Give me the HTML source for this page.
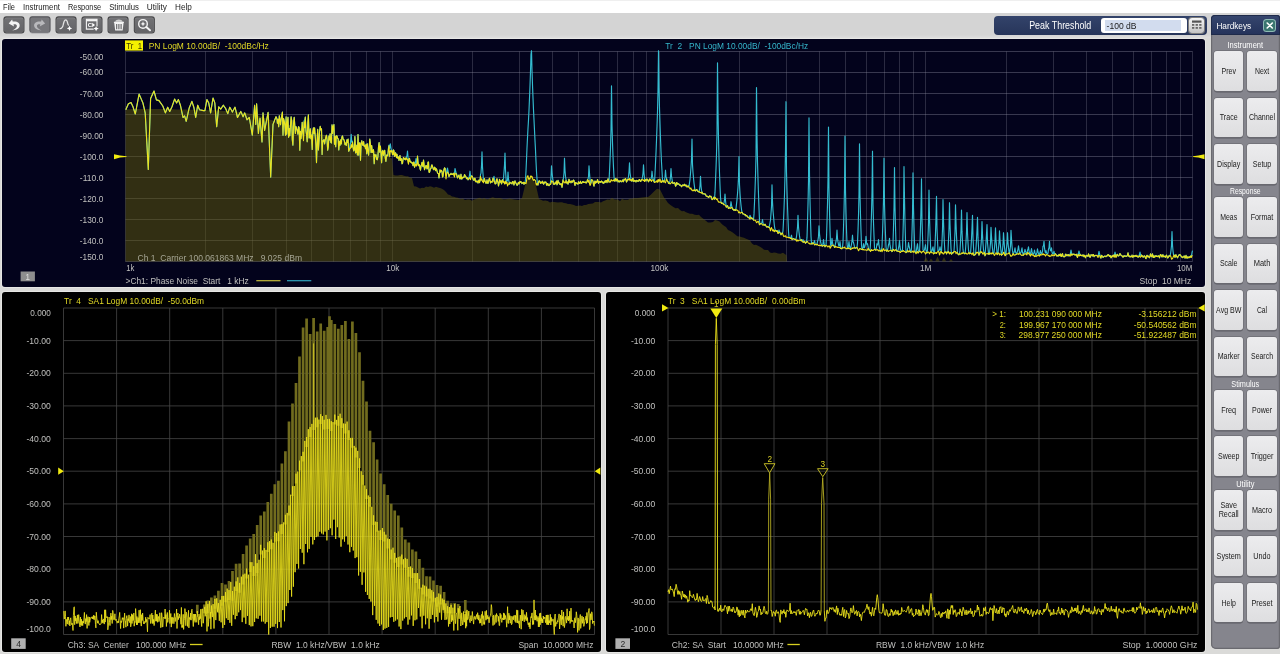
<!DOCTYPE html>
<html lang="en"><head><meta charset="utf-8"><title>Network Analyzer</title>
<style>
html,body{margin:0;padding:0}
body{width:1280px;height:654px;overflow:hidden;background:#dadad8;position:relative;font-family:"Liberation Sans",sans-serif}
#menu{position:absolute;left:0;top:0;width:1280px;height:13px;background:linear-gradient(#efefef 0,#efefef 1px,#ffffff 1.500px,#ffffff 100%)}
#tbbg{position:absolute;left:0;top:13px;width:1280px;height:25px;background:linear-gradient(#d4d4d4 0,#d4d4d4 88%,#dedede 100%)}
#tb{position:absolute;left:0;top:14px;will-change:transform}
.win{position:absolute;overflow:hidden;border-radius:3px;box-shadow:0 0 0 1px #e6e6e4}
.plot{display:block;position:absolute;left:0;top:0;will-change:transform}
text{font-family:"Liberation Sans",sans-serif}
#ov{position:absolute;left:0;top:0;pointer-events:none;will-change:transform}
#pk{position:absolute;left:994px;top:16px;width:213px;height:18.600px;border-radius:4px;background:linear-gradient(#33436a,#27355a)}
#pk .inp{position:absolute;left:107.200px;top:2.300px;width:85.800px;height:14.400px;border-radius:3px;background:#fff}
#pk .sel{position:absolute;left:4.200px;top:1.600px;width:75.600px;height:10.800px;background:#d2dcee}
#pk .kp{position:absolute;left:195.300px;top:2.300px;width:15.200px;height:14.400px;border-radius:3px;background:linear-gradient(#f6f6f6,#c4c4c4);box-shadow:0 0 0 1px #7c7c7c}
#pk .kp svg{display:block}
#hk{position:absolute;left:1210.500px;top:15.400px;width:69px;height:633.800px;background:#85858d;border-radius:5px 3px 3px 5px;box-shadow:0 0 0 1.200px #6a6a70 inset}
#hkhead{position:absolute;left:0;top:0;width:69px;height:19.300px;background:linear-gradient(#36466e,#24325a);border-radius:4px 3px 0 0;box-shadow:0 0 0 1px #1e2a4a inset}
#hkx{position:absolute;left:53px;top:4.400px;width:11.500px;height:11px;border-radius:2.500px;background:#3a7670;box-shadow:0 0 0 1px #8fbab4}
#hkx svg{display:block}
.hkb{position:absolute;width:29.500px;height:39.600px;border-radius:3px;background:linear-gradient(#ececee,#dedee0);box-shadow:0 0 0 .7px #6e6e74,0 1.600px .5px 0 #5c5c64}
</style></head><body>
<div id="menu"></div>
<div id="tbbg"></div>
<svg id="tb" width="160" height="24" viewBox="0 14 160 24"><defs><linearGradient id="bg1" x1="0" y1="0" x2="0" y2="1"><stop offset="0" stop-color="#717174"/><stop offset="1" stop-color="#646467"/></linearGradient></defs>
<rect x="3.4" y="16.3" width="21.100" height="17.200" rx="3" fill="#48484a"/>
<rect x="4.5" y="17.4" width="18.900" height="15" rx="2" fill="#86868a"/>
<rect x="4.5" y="18.2" width="18.900" height="14.200" rx="2" fill="url(#bg1)"/>
<g transform="translate(3.4,16.3)"><path d="M5.300 7.300L8.700 3.100L9.300 5.300C13.600 4.700 17 6.900 16.200 9.900C15.500 12.500 12.300 14 8.800 14.100C11.800 13 13.500 11.500 13.500 9.800C13.500 8.200 12 7.700 10 8.100L10.700 10.300Z" fill="#f4f4f4"/></g>
<rect x="29.4" y="16.3" width="21.100" height="17.200" rx="3" fill="#a2a2a6"/>
<rect x="29.4" y="16.3" width="21.100" height="16.300" rx="3" fill="#58585c"/>
<rect x="30.4" y="17.4" width="19.100" height="14.800" rx="2" fill="#77777b"/>
<g transform="translate(29.4,16.3)"><g transform="translate(21,0) scale(-1,1)"><path d="M5.300 7.300L8.700 3.100L9.300 5.300C13.600 4.700 17 6.900 16.200 9.900C15.500 12.500 12.300 14 8.800 14.100C11.800 13 13.500 11.500 13.500 9.800C13.500 8.200 12 7.700 10 8.100L10.700 10.300Z" fill="#b9b9bc"/></g></g>
<rect x="55.5" y="16.3" width="21.100" height="17.200" rx="3" fill="#48484a"/>
<rect x="56.6" y="17.4" width="18.900" height="15" rx="2" fill="#86868a"/>
<rect x="56.6" y="18.2" width="18.900" height="14.200" rx="2" fill="url(#bg1)"/>
<g transform="translate(55.5,16.3)"><path d="M4.600 12.400C7.400 12.200 7.400 9.800 8 7.200C8.600 4.600 9.200 3.500 10.200 3.500C11.400 3.500 11.800 5 12.100 6.600C12.300 7.700 12.500 8.300 13 8.800" fill="none" stroke="#e4e4e4" stroke-width="1.250" stroke-linecap="round"/><path d="M14 9.4L14.8 11.3L16.7 12.1L14.8 12.9L14 14.8L13.2 12.9L11.3 12.1L13.2 11.3Z" fill="#ffffff"/></g>
<rect x="81.4" y="16.3" width="21.100" height="17.200" rx="3" fill="#48484a"/>
<rect x="82.5" y="17.4" width="18.900" height="15" rx="2" fill="#86868a"/>
<rect x="82.5" y="18.2" width="18.900" height="14.200" rx="2" fill="url(#bg1)"/>
<g transform="translate(81.4,16.3)"><path d="M5 3H15.600V12.800H5z" fill="none" stroke="#f4f4f4" stroke-width="1.100"/><path d="M5 3H15.600V5H5z" fill="#f4f4f4"/><text x="6.300" y="11" font-size="6" font-weight="bold" fill="#fff">C</text><path d="M10.800 6.500L13.600 8.700L10.800 10.900z" fill="#fff"/><circle cx="14.700" cy="12.300" r="2.600" fill="#68686b"/><path d="M14.7 9.6L15.5 11.5L17.4 12.3L15.5 13.1L14.7 15L13.9 13.1L12 12.3L13.9 11.5Z" fill="#ffffff"/></g>
<rect x="107.5" y="16.3" width="21.100" height="17.200" rx="3" fill="#48484a"/>
<rect x="108.6" y="17.4" width="18.900" height="15" rx="2" fill="#86868a"/>
<rect x="108.6" y="18.2" width="18.900" height="14.200" rx="2" fill="url(#bg1)"/>
<g transform="translate(107.5,16.3)"><path d="M6.700 6.100H16.100L15.100 14.200H7.700z" fill="#f4f4f4"/><path d="M9.200 7.600V13M11.400 7.600V13M13.600 7.600V13" stroke="#606063" stroke-width="1.100"/><path d="M7.600 5.400C8.300 2.400 14.300 2.300 15.200 5.400z" fill="#d0d0d0"/><path d="M6.400 6H16.400" stroke="#fff" stroke-width="1.100"/></g>
<rect x="133.8" y="16.3" width="21.100" height="17.200" rx="3" fill="#48484a"/>
<rect x="134.9" y="17.4" width="18.900" height="15" rx="2" fill="#86868a"/>
<rect x="134.9" y="18.2" width="18.900" height="14.200" rx="2" fill="url(#bg1)"/>
<g transform="translate(133.8,16.3)"><circle cx="9.200" cy="7.600" r="4.300" fill="none" stroke="#f4f4f4" stroke-width="1.400"/><path d="M12.500 10.700L16.200 14" stroke="#f4f4f4" stroke-width="2" stroke-linecap="round"/><path d="M9.2 5L9.9 6.9L11.8 7.6L9.9 8.3L9.2 10.2L8.5 8.3L6.6 7.6L8.5 6.9Z" fill="#ffffff"/></g>
</svg>
<div id="pk"><div class="inp"><div class="sel"></div></div><div class="kp"><svg width="15" height="14" viewBox="0 0 15 14"><rect x="3" y="2.500" width="9.500" height="2.200" fill="#555"/><g fill="#666"><rect x="3" y="6" width="2.300" height="1.800"/><rect x="6.600" y="6" width="2.300" height="1.800"/><rect x="10.200" y="6" width="2.300" height="1.800"/><rect x="3" y="9" width="2.300" height="1.800"/><rect x="6.600" y="9" width="2.300" height="1.800"/><rect x="10.200" y="9" width="2.300" height="1.800"/></g></svg></div></div>
<div id="hk">
<div id="hkhead"><div id="hkx"><svg width="11.500" height="11" viewBox="0 0 11.500 11"><path d="M3.200 3L8.300 8M8.300 3L3.200 8" stroke="#fff" stroke-width="1.600" stroke-linecap="round"/></svg></div></div>
<div class="hkb" style="left:3.3px;top:35.7px"></div>
<div class="hkb" style="left:36.7px;top:35.7px"></div>
<div class="hkb" style="left:3.3px;top:82.2px"></div>
<div class="hkb" style="left:36.7px;top:82.2px"></div>
<div class="hkb" style="left:3.3px;top:128.6px"></div>
<div class="hkb" style="left:36.7px;top:128.6px"></div>
<div class="hkb" style="left:3.3px;top:182px"></div>
<div class="hkb" style="left:36.7px;top:182px"></div>
<div class="hkb" style="left:3.3px;top:228.5px"></div>
<div class="hkb" style="left:36.7px;top:228.5px"></div>
<div class="hkb" style="left:3.3px;top:274.9px"></div>
<div class="hkb" style="left:36.7px;top:274.9px"></div>
<div class="hkb" style="left:3.3px;top:321.4px"></div>
<div class="hkb" style="left:36.7px;top:321.4px"></div>
<div class="hkb" style="left:3.3px;top:374.6px"></div>
<div class="hkb" style="left:36.7px;top:374.6px"></div>
<div class="hkb" style="left:3.3px;top:421.1px"></div>
<div class="hkb" style="left:36.7px;top:421.1px"></div>
<div class="hkb" style="left:3.3px;top:474.6px"></div>
<div class="hkb" style="left:36.7px;top:474.6px"></div>
<div class="hkb" style="left:3.3px;top:521.1px"></div>
<div class="hkb" style="left:36.7px;top:521.1px"></div>
<div class="hkb" style="left:3.3px;top:567.5px"></div>
<div class="hkb" style="left:36.7px;top:567.5px"></div>
</div>
<div class="win" style="left:2px;top:39px;width:1203px;height:248px;background:#03031c"><svg class="plot" width="1203" height="248" viewBox="2 39 1203 248">
<path d="M125.5 51.5H1192.5M125.5 72.5H1192.5M125.5 93.5H1192.5M125.5 114.5H1192.5M125.5 135.5H1192.5M125.5 156.5H1192.5M125.5 177.5H1192.5M125.5 198.5H1192.5M125.5 219.5H1192.5M125.5 240.5H1192.5M125.5 261.5H1192.5" fill="none" stroke="#9090a2" stroke-width="1" opacity="0.38"/>
<path d="M125.5 51.5V261.5M205.5 51.5V261.5M252.5 51.5V261.5M286.5 51.5V261.5M311.5 51.5V261.5M333.5 51.5V261.5M350.5 51.5V261.5M366.5 51.5V261.5M380.5 51.5V261.5M392.5 51.5V261.5M472.5 51.5V261.5M519.5 51.5V261.5M552.5 51.5V261.5M578.5 51.5V261.5M599.5 51.5V261.5M617.5 51.5V261.5M633.5 51.5V261.5M646.5 51.5V261.5M659.5 51.5V261.5M739.5 51.5V261.5M786.5 51.5V261.5M819.5 51.5V261.5M845.5 51.5V261.5M866.5 51.5V261.5M884.5 51.5V261.5M899.5 51.5V261.5M913.5 51.5V261.5M925.5 51.5V261.5M1006.5 51.5V261.5M1053.5 51.5V261.5M1086.5 51.5V261.5M1112.5 51.5V261.5M1133.5 51.5V261.5M1151.5 51.5V261.5M1166.5 51.5V261.5M1180.5 51.5V261.5M1192.5 51.5V261.5" fill="none" stroke="#9090a2" stroke-width="1" opacity="0.28"/>
<path d="M125.5 261.5L125.5 109.2L127.5 109.2L129.6 109.2L131.6 109.1L133.7 109.1L135.7 109.1L137.8 109L139.8 109L141.8 109L143.9 108.9L145.9 108.9L148 108.9L150 108.8L152 108.9L154 108.9L156 109L158 109L160 109L162 109.1L164 109.1L166 109.2L168 109.2L170 109.2L172 109.3L174 109.3L176 109.4L178 109.4L180 109.5L182.1 109.5L184.1 109.6L186.2 109.6L188.2 109.7L190.3 109.7L192.4 109.8L194.4 109.8L196.5 109.9L198.5 109.9L200.6 110L202.6 110L204.7 110.1L206.8 110.1L208.8 110.2L210.9 110.2L212.9 110.3L215 110.3L217.1 110.4L219.2 110.6L221.2 110.7L223.3 110.9L225.4 111L227.5 111.1L229.6 111.3L231.7 111.4L233.8 111.6L235.8 111.7L237.9 111.8L240 112L242.1 112.3L244.3 112.7L246.4 113.1L248.6 113.4L250.7 113.8L252.9 114.1L255 114.5L257.1 115.2L259.3 116L261.4 116.8L263.6 117.5L265.7 118.2L267.9 119L270 119.8L272 120.3L274 120.8L276 121.3L278 121.8L280 122.4L282 122.9L284 123.4L286 124L288 124.5L290 125L292 125.6L294 126.3L296 126.9L298 127.5L300 128.2L302 128.8L304 129.4L306 130L308 130.7L310 131.3L312 131.8L314 132.4L316 132.9L318 133.4L320 133.9L322 134.5L324 135L326 135.5L328 136L330 136.6L332 137.2L334 137.8L336 138.4L338 139.1L340 139.7L342 140.3L344 141L346 141.6L348 142.2L350 142.9L352 143.5L354 144.1L356 144.7L358 145.4L360 146L362 146.6L364 147.3L366 147.9L368 148.5L370 149.2L372.1 150.1L374.3 150.9L376.4 151.8L378.6 152.8L380.7 153.7L382.9 154.5L385 155.4L387.3 156.5L389.7 157.6L392 158.6L393.5 174.9L395.7 175.5L397.8 175.6L400 174.9L402 174.9L404 175.7L406 176.3L408 176.3L410 177.7L412 177.9L414 186.2L416 186.6L418 187.4L420 188.6L422 187.7L424 187.9L426 186.6L428 186.9L430 186.3L432 186.8L434 187.8L436 186.8L438 187.5L440 188.1L442 188.7L444 190L446 192.1L448 194.5L450 195.1L452 196.5L454 196.8L456 197.5L458 197.8L460.3 199.1L462.7 198.6L465 200.1L467.3 199.6L469.7 199.5L472 200.8L474 199.5L476 199.1L478 198.2L480 197.8L482 199L484 198L486 198.9L488.2 199.2L490.5 198L492.8 197.3L495 197.9L497 198.3L499 197.9L501 198.3L503 199.2L505.2 199.2L507.5 199.1L509.8 198.4L512 198.9L514.3 199.6L516.7 199.7L519 199.9L522 198.1L525 185.6L528 177.8L530.5 176L533 178.7L536 185.5L539 198.9L541 199.8L543 200.7L545.3 200.5L547.7 200.9L550 202.4L552 201.7L554 202L556 202.3L558 202.6L560 202.2L562 202.3L564 202.9L566 203.2L568 204L570 204.1L572 204.6L574 205.1L576 206.1L578 205.8L580 205.5L582 205.9L584 205.1L586 205L588.2 203.9L590.5 203.8L592.8 203.4L595 202L597 201.9L599 202.1L601 202.6L603 201.3L605 200.6L607.3 199.6L609.7 199.7L612 197.7L614 199.2L616 199.4L618 199.6L620 201.3L622 198.8L624 199.8L626 199.7L628 199.7L630 198.5L632 198.8L634 197.9L636 198.3L638 198.1L640 197.7L642 197.4L644 197.3L646 197.1L648 197L650.5 195L653 192.4L655 190.5L657 188.8L660 189.6L662 193.4L664 197.5L666 200.1L668 203.1L670.5 205.1L673 206.7L675.5 208.2L678 208L680 209.9L682 211.2L684 211L686 212.3L688 213L690 213.7L692.3 213.8L694.7 214.8L697 215L699 214.8L701 216.9L703 218.4L705.5 220.6L708 222.4L710.5 222.4L713 222L715 220L717 220.4L719.5 221.5L722 224.2L724 225.7L726 227.1L728 229.9L730.3 231.1L732.7 232.5L735 234.3L737.3 236.2L739.7 236.6L742 237.2L744 237.7L746 238.8L748 239.5L750 240.4L752 243.4L754 244.9L756 244.7L758 245.8L760 246.7L762 248L764 249.8L766 250L768 250L770 252.4L772 253L774 252.6L776 252.7L778 253.6L780.5 253.8L783 252.7L786.5 255.2L787 261.5ZM923.8 261.5L926 257L928.2 261.5ZM928.8 261.5L931 258.5L933.2 261.5ZM935.3 261.5L937.5 256.5L939.7 261.5ZM941.8 261.5L944 257L946.2 261.5ZM948.8 261.5L951 259L953.2 261.5Z" fill="#5e580b" fill-opacity="0.52" stroke="none"/>
<path d="M125.8 109.8L128.4 103.7L131 102.6L133 106.8L135.3 114L139.1 94.1L142.9 102.9L145.2 112.9L148.3 169.5L150.6 98.4L154 91L156.4 99.9L159 100.6L162.8 106L165.4 112.9L167.7 107.2L169.7 111.4L172 106.8L174.6 99.1L176.6 102.9L178.4 99.6L180.4 105.2L183 117.5L184.6 115.9L186.2 121.3L189.1 108.3L191.9 101.4L193.9 107.5L195.7 117.5L197.7 105.2L199.5 109.8L203.4 110.6L204.9 110.6L206.9 99.6L208.7 102.9L210.6 112.9L213 98L214.8 102.9L216.7 126.6L218.7 106.8L220.7 109.1L223.3 105.2L225.5 108.3L227.8 113.6L229.8 107.2L232.4 112.1L235 107.2L237.5 117.5L240.8 111.4L243.1 116.7L244.7 112.9L247 119.8L249.3 117.5L252.3 135.1L254.6 105.2L255.8 124.4L256.6 103.7L258.4 133.5L260 118.2L262 141.9L263 112.9L264.6 130.5L268.1 112.4L270.7 177.1L273 124.4L276 116.7L276.8 118.2L277.4 123.3L278.1 119.4L278.7 126.6L279.3 115.7L279.9 119.2L280.5 124.8L281.2 119.5L281.8 115.4L282.4 112L283 135.2L283.6 118.6L284.3 121.7L284.9 125.7L285.5 135.3L286.1 116.9L286.7 134.3L287.4 122L288 117.2L288.6 137.3L289.2 128.6L289.8 135.7L290.5 125.3L291.1 116.8L291.7 120.7L292.3 139.7L292.9 145.2L293.6 123.1L294.2 117.3L294.8 125.4L295.4 133.5L296 126.6L296.7 128.9L297.3 130.4L297.9 134.2L298.5 126.7L299.1 127.4L299.8 150.2L300.4 131.4L301 138.8L301.6 133.6L302.2 122.3L302.9 131.9L303.5 136.9L304.1 120.9L304.7 119.8L305.3 117.1L306 130.2L306.6 134.9L307.2 141.7L307.8 123.1L308.4 114.9L309.1 138L309.7 137L310.3 128.8L310.9 138.6L311.5 135L312.2 149.4L312.8 132.2L313.4 127.8L314 133.7L314.6 127.8L315.3 137L315.9 144.6L316.5 162.6L317.1 144.4L317.7 129.4L318.4 150L319 141.1L319.6 131.6L320.2 126.4L320.8 130L321.5 128.8L322.1 154.4L322.7 140.7L323.3 141.1L323.9 139.6L324.6 144L325.2 140.3L325.8 137.4L326.4 135.2L327 139.3L327.7 150.1L328.3 146.9L328.9 136L329.5 140L330.1 133.9L330.8 142.3L331.4 143L332 124.8L332.6 133.4L333.2 126.4L333.9 124.6L334.5 144.3L335.1 136.5L335.7 146.7L336.3 135.7L337 136L337.6 138.5L338.2 138.8L338.8 149.9L339.4 141.4L340.1 145.3L340.7 139.8L341.3 143.9L341.9 137L342.5 135.9L343.2 139.4L343.8 139.5L344.4 141.1L345 144.7L345.6 143.1L346.3 145.4L346.9 139.9L347.5 142.5L348.1 139.1L348.7 151.3L349.4 149.7L350 146.2L350.6 142.4L351.2 134.4L351.8 142.2L352.5 141.2L353.1 147.7L353.7 151L354.3 149.8L354.9 136.6L355.6 152.9L356.2 152.3L356.8 145.2L357.4 155L358 134.6L358.7 155.1L359.3 143.1L359.9 142.9L360.5 160.3L361.1 144.7L361.8 140.7L362.4 144.1L363 145.5L363.6 141.6L364.2 146.5L364.9 145.6L365.5 148.6L366.1 144.2L366.7 153.8L367.3 143.7L368 151.5L368.6 155.2L369.2 146.8L369.8 139.1L370.4 143.6L371.1 152.5L371.7 145.6L372.3 152.5L372.9 150.7L373.5 149.7L374.2 163.6L374.8 154.6L375.4 156.5L376 154.8L376.6 159.3L377.3 159.7L377.9 156.7L378.5 147L379.1 142.6L379.7 152.1L380.4 146.1L381 153.7L381.6 162.8L382.2 151.8L382.8 150.4L383.5 155.3L384.1 151.5L384.7 150.3L385.3 158.1L385.9 161.4L386.6 155L387.2 155.1L387.8 156L388.4 148.4L389 145L389.7 148.5L390.3 143.9L390.9 147.8L391.5 150.5L392 150.4L392.5 154.7L393 154.6L393.5 149.9L394 151L394.5 156.4L395 155.9L395.5 152.7L396 153.9L396.5 157.7L397 154.4L397.5 157.8L398 158.2L398.5 156.9L399 160.5L399.5 157L400 155.5L400.5 160.4L401 158.9L401.5 158.7L402 163.8L402.5 163.4L403 159.6L403.5 157.5L404 158.2L404.5 159.3L405 158.7L405.5 159.8L406 157.9L406.5 156.8L407 155.7L407.5 151L408 157.3L408.5 161.5L409 158.9L409.5 158.4L410 161.7L410.5 161.4L411 162.5L411.5 162.2L412 163.3L412.5 162.8L413 165.6L413.5 162.2L414 162.1L414.5 167.3L415 164.8L415.5 162L416 158.6L416.5 162.8L417 163.7L417.5 156L418 162L418.5 165.6L419 164.9L419.5 164.9L420 168.6L420.5 170.2L421 166.1L421.5 165L422 162.4L422.5 165.2L423 166.7L423.5 160.1L424 164.1L424.5 169.6L425 168.1L425.5 167.2L426 165.5L426.5 166L427 168.9L427.5 168.3L428 162.3L428.5 162L429 172.1L429.5 172.4L430 170.5L430.5 168.7L431 168.5L431.5 165.6L432 164.9L432.5 166.5L433 168.1L433.5 169.7L434 169.4L434.5 167.2L435 167.7L435.5 170.6L436 168.7L436.5 168.9L437 171L437.5 172.9L438 173.5L438.5 173.6L439 177.9L439.5 173.6L440 169.8L440.5 172L441 170.7L441.5 170.4L442 171.4L442.5 176.9L443 176.3L443.5 172.3L444 169.4L444.5 167.8L445 168.4L445.5 168.5L446 175.4L446.5 173.6L447 171L447.5 168.1L448 171L448.5 173L449 176.6L449.5 175.2L450 174.6L450.5 174.4L451 173.3L451.5 174.3L452 174.4L452.5 174.5L453 173.7L453.5 173.3L454 174.8L454.5 174.1L455 168.5L455.5 170.6L456 172.4L456.5 173.5L457 176.4L457.5 177.9L458 176.7L458.5 175.6L459 175L459.5 177.9L460 179L460.5 177.5L461 174.2L461.5 179L462 178.9L462.5 177.5L463 177.1L463.5 177.6L464 177.3L464.5 174.5L465 175.3L465.5 176.6L466 176.7L466.5 178.7L467 178L467.5 177.9L468 179.8L468.5 179.3L469 177.8L469.5 175L470 171.2L470.5 176.2L471 176.4L471.5 175.9L472 176.1L472.5 176.9L473 178.8L473.5 180.1L474 180.3L474.5 178.3L475 178.4L475.5 181.7L476 181.2L476.5 181.9L477 180.9L477.5 181.5L478 183L478.5 181L479 180L479.5 182.6L480 180.6L480.5 174.6L481 173.1L481.5 165.7L482 151.9L482.5 167.1L483 173.8L483.5 180.8L484 180.1L484.5 178.6L485 181.3L485.5 181.9L486 183.3L486.5 182.9L487 179.9L487.5 182.6L488 183.4L488.5 181.3L489 179.5L489.5 178.2L490 180.6L490.5 182.9L491 181.5L491.5 181.5L492 182.3L492.5 180.3L493 178L493.5 178.4L494 176.4L494.5 179.4L495 183.3L495.5 183.8L496 183.5L496.5 179.6L497 178.8L497.5 181.3L498 182.4L498.5 186L499 183.7L499.5 179.4L500 181.9L500.5 182.1L501 180.7L501.5 183.9L502 182.6L502.5 179.7L503 180.9L503.5 178.4L504 171.9L504.5 165L505 153.1L505.5 170.3L506 178.1L506.5 182.4L507 180.9L507.5 180.3L508 172L508.5 179.2L509 181.7L509.5 184.1L510 182.4L510.5 182.8L511 183L511.5 183.3L512 183.8L512.5 181.5L513 181.5L513.5 183.2L514 185L514.5 182.5L515 180.9L515.5 182.8L516 183L516.5 184.2L517 185.3L517.5 185.1L518 183.3L518.5 182.4L519 183.9L519.5 182.8L520 181.4L520.5 182.2L521 181.7L521.5 182.7L522 183.6L522.5 182.7L523 182.9L523.5 182.3L524 184.3L524.5 182.5L525 182.8L525.5 179.4L526 171L526.5 159.8L527 147.8L527.5 137.8L528 128.3L528.5 120.1L529 110L529.5 98.1L530 85.9L530.5 71.4L531 54.3L531.5 50.7L532 70.6L532.5 85L533 98L533.5 109.8L534 120L534.5 130.2L535 140.6L535.5 149.9L536 161.6L536.5 171.7L537 179L537.5 184.8L538 185L538.5 182.3L539 180.9L539.5 180.9L540 182.2L540.5 183.4L541 182L541.5 182.7L542 183L542.5 181.2L543 182.5L543.5 184.2L544 183.6L544.5 182.3L545 182L545.5 182.5L546 182.2L546.5 184.6L547 185.4L547.5 183.5L548 184L548.5 185.4L549 185.6L549.5 185.1L550 184L550.5 182.3L551 177.5L551.5 165.9L552 172.5L552.5 177L553 180.4L553.5 184.1L554 184.1L554.5 184.3L555 182.8L555.5 183.7L556 182.2L556.5 181.1L557 184.8L557.5 183.5L558 180.4L558.5 182.6L559 182.3L559.5 184.2L560 184L560.5 184.6L561 183.6L561.5 184.5L562 187.3L562.5 184.4L563 179.8L563.5 178L564 172.7L564.5 158.2L565 170.2L565.5 176.4L566 179.5L566.5 182.9L567 183L567.5 181.9L568 184.1L568.5 181.9L569 179.2L569.5 182.3L570 181.4L570.5 181.3L571 182.8L571.5 181.1L572 181.3L572.5 182.1L573 180.7L573.5 180L574 180.6L574.5 183.5L575 185.4L575.5 182.5L576 182.8L576.5 183.1L577 183.7L577.5 183.6L578 184.1L578.5 181.7L579 182.5L579.5 183.4L580 182.8L580.5 181.3L581 183.1L581.5 183.5L582 182.7L582.5 182L583 181.5L583.5 182.5L584 182.4L584.5 182.5L585 182.1L585.5 182L586 183L586.5 182.7L587 181.8L587.5 179.5L588 179.3L588.5 176.6L589 165.9L589.5 173.1L590 179.7L590.5 183.1L591 183L591.5 179.5L592 179.9L592.5 180.4L593 181.3L593.5 184.7L594 186.1L594.5 182.4L595 181L595.5 183.1L596 181.6L596.5 182.6L597 181.7L597.5 179.5L598 181.5L598.5 183.4L599 181.6L599.5 182.2L600 181.5L600.5 182.3L601 181.6L601.5 181L602 181.9L602.5 182.8L603 181.9L603.5 183.3L604 183L604.5 182.1L605 181L605.5 182.2L606 180.5L606.5 180.6L607 182.7L607.5 180.7L608 178.8L608.5 180.4L609 181.6L609.5 171.4L610 160.4L610.5 147.4L611 129.7L611.5 85.9L612 124.8L612.5 142.8L613 156.6L613.5 167.4L614 176.7L614.5 180.8L615 181.2L615.5 178.6L616 179L616.5 180.9L617 179.1L617.5 179.6L618 181.9L618.5 180.9L619 181.3L619.5 181.9L620 180.8L620.5 180.7L621 181.6L621.5 181.8L622 181.7L622.5 180L623 180.7L623.5 181.7L624 179.2L624.5 179.9L625 179.6L625.5 178.5L626 180L626.5 182L627 181.1L627.5 179.7L628 179.3L628.5 176.5L629 171.9L629.5 162.8L630 172.5L630.5 176.4L631 179.5L631.5 180.9L632 181.1L632.5 178.9L633 178.4L633.5 181.4L634 181.4L634.5 180.4L635 180.6L635.5 180.9L636 181.9L636.5 180.4L637 180.6L637.5 181.2L638 181L638.5 181.2L639 180L639.5 179.5L640 180.6L640.5 181.4L641 181.1L641.5 179.6L642 179.5L642.5 176.9L643 173.3L643.5 164.9L644 173.2L644.5 178.2L645 179.7L645.5 179.8L646 181L646.5 179.2L647 179.1L647.5 179.9L648 180.6L648.5 181.7L649 180.8L649.5 179L650 180.2L650.5 179.5L651 179.1L651.5 177.2L652 171.2L652.5 176.4L653 178.5L653.5 180.5L654 181.5L654.5 182.4L655 173.7L655.5 163.4L656 152.9L656.5 140.2L657 126.8L657.5 111.9L658 90.3L658.5 50.7L659 87.6L659.5 108.3L660 123.7L660.5 138.5L661 151.6L661.5 162.5L662 170.8L662.5 180.1L663 181.9L663.5 181.7L664 180.4L664.5 180.3L665 177.4L665.5 170.2L666 176.4L666.5 178L667 180.2L667.5 181.5L668 181.6L668.5 183.4L669 183L669.5 183.1L670 180.9L670.5 176.8L671 168.5L671.5 176.1L672 179.2L672.5 182.2L673 183.5L673.5 183.1L674 183L674.5 182.6L675 183.7L675.5 186.2L676 185.6L676.5 182.6L677 182.7L677.5 184.2L678 183.9L678.5 183.8L679 184.2L679.5 185.1L680 185.3L680.5 185L681 185.8L681.5 186.7L682 186.1L682.5 185.1L683 185L683.5 185.5L684 185.7L684.5 184.3L685 185.2L685.5 185.9L686 185L686.5 186.1L687 187L687.5 186.5L688 185.8L688.5 186.6L689 186.4L689.5 182.8L690 179.3L690.5 173.4L691 167L691.5 158.8L692 139.1L692.5 164.6L693 172.5L693.5 177.9L694 183.1L694.5 186.8L695 190.8L695.5 190.9L696 190.2L696.5 189.6L697 189.8L697.5 190.8L698 191.4L698.5 191.8L699 191.3L699.5 189.5L700 185.5L700.5 176.4L701 185.7L701.5 190.4L702 192L702.5 193.1L703 194L703.5 193.8L704 193.7L704.5 193.9L705 194.2L705.5 194.1L706 195.8L706.5 196.1L707 196.5L707.5 196.3L708 196.8L708.5 197.5L709 197L709.5 195.9L710 196L710.5 196.6L711 196.4L711.5 197.2L712 199.4L712.5 199.4L713 198.8L713.5 198L714 197L714.5 199.1L715 192.4L715.5 180.4L716 168.5L716.5 153.9L717 134.1L717.5 62.8L718 110.9L718.5 138.7L719 158.2L719.5 173.1L720 186L720.5 197.6L721 202.3L721.5 203.4L722 202.8L722.5 203.5L723 203.5L723.5 204.6L724 202.9L724.5 200.2L725 194.1L725.5 200.5L726 204.8L726.5 207.1L727 206.2L727.5 205.6L728 207L728.5 208.5L729 208.3L729.5 207.6L730 207.3L730.5 205.8L731 201.7L731.5 205.1L732 207L732.5 209L733 209.3L733.5 209.3L734 210.4L734.5 209.8L735 209.6L735.5 210.5L736 208.5L736.5 204.1L737 199.6L737.5 193.8L738 187L738.5 177.3L739 156.5L739.5 184.6L740 193.2L740.5 200L741 205.2L741.5 209.5L742 212.3L742.5 212.9L743 213.9L743.5 214L744 214L744.5 214.8L745 214.5L745.5 214.6L746 216L746.5 215.5L747 215.9L747.5 216.2L748 217.4L748.5 217.6L749 217.6L749.5 217.2L750 215.3L750.5 216.7L751 217.3L751.5 218.4L752 218.1L752.5 218.7L753 219L753.5 220.1L754 213.9L754.5 202.8L755 190.1L755.5 175.2L756 156.9L756.5 87.6L757 136L757.5 161.8L758 179.6L758.5 194.4L759 208.2L759.5 220.8L760 224.2L760.5 223.5L761 223.8L761.5 223.3L762 222.2L762.5 219.5L763 223.1L763.5 224.4L764 224.8L764.5 225.2L765 224.2L765.5 225L766 226L766.5 226.7L767 227.1L767.5 226.6L768 226.5L768.5 227.2L769 227.4L769.5 225.4L770 223L770.5 220.1L771 213.4L771.5 206.5L772 184.8L772.5 201.9L773 210.8L773.5 216L774 222.1L774.5 226.7L775 229.3L775.5 230.6L776 230.8L776.5 231.3L777 230.5L777.5 231.8L778 233.1L778.5 231.8L779 230L779.5 231.6L780 232.6L780.5 233.6L781 234.8L781.5 233.9L782 233.1L782.5 233.3L783 230.8L783.5 221.1L784 209.1L784.5 194.4L785 176L785.5 149.8L786 101.7L786.5 171.8L787 191L787.5 206.4L788 219.5L788.5 231.2L789 237.5L789.5 237.6L790 237.8L790.5 238.1L791 237.2L791.5 235.2L792 238.1L792.5 238.9L793 238.9L793.5 238.6L794 238.9L794.5 239.4L795 239.4L795.5 239.5L796 238.9L796.5 236.7L797 231.9L797.5 227.4L798 215.3L798.5 227L799 232L799.5 235.9L800 239.1L800.5 240.1L801 240.6L801.5 239.7L802 240.9L802.5 241L803 239.5L803.5 241.3L804 241.9L804.5 241.3L805 242.2L805.5 243.2L806 242.5L806.5 242.2L807 237.4L807.5 221.9L808 204.2L808.5 180.8L809 117.9L809.5 174.3L810 200.7L810.5 220.1L811 236.1L811.5 243.8L812 244.1L812.5 243L813 242.9L813.5 243L814 242.7L814.5 240.5L815 243.2L815.5 244L816 244.6L816.5 244.8L817 243.9L817.5 241.7L818 239.8L818.5 236.4L819 225.8L819.5 233.7L820 238.3L820.5 241.5L821 243.5L821.5 245.2L822 246L822.5 245.9L823 243.6L823.5 239.5L824 243.2L824.5 245.4L825 246.8L825.5 245.8L826 245.4L826.5 237.7L827 222.1L827.5 204L828 178.7L828.5 127.1L829 188.7L829.5 210.9L830 230.1L830.5 244.8L831 246.1L831.5 243.2L832 238.4L832.5 242.8L833 244.8L833.5 245.6L834 245.9L834.5 247.4L835 246.2L835.5 243.5L836 241.5L836.5 238.1L837 230L837.5 238.3L838 241.9L838.5 244.5L839 246.3L839.5 245.5L840 241.6L840.5 246L841 248.1L841.5 248.7L842 248.6L842.5 247.6L843 242L843.5 228L844 210.9L844.5 188.3L845 136.1L845.5 190.2L846 212.5L846.5 229.7L847 243.4L847.5 248.6L848 248.1L848.5 245.6L849 241.6L849.5 246.2L850 248.2L850.5 248.8L851 246.6L851.5 244.3L852 241.1L852.5 235.2L853 241.5L853.5 242.6L854 244.6L854.5 246.9L855 248.2L855.5 248.1L856 247.9L856.5 247.6L857 247.3L857.5 243.1L858 230.8L858.5 215.5L859 193.8L859.5 143.9L860 194.5L860.5 215.1L861 231.2L861.5 245L862 249.5L862.5 248.7L863 247.8L863.5 243.7L864 247.4L864.5 247.7L865 245.8L865.5 243.4L866 236.3L866.5 242.3L867 244.5L867.5 243.7L868 246.2L868.5 248.6L869 250L869.5 250.1L870 250.4L870.5 243.6L871 229.8L871.5 213.1L872 192L872.5 151.2L873 204.3L873.5 222.2L874 235.9L874.5 247.9L875 249.5L875.5 250.2L876 249.4L876.5 247.1L877 243.7L877.5 244.9L878 243.4L878.5 239.5L879 245.5L879.5 247.6L880 249.7L880.5 251.2L881 250.2L881.5 250.1L882 246.5L882.5 233.8L883 218.4L883.5 199.8L884 158.2L884.5 203.8L885 221.3L885.5 234.8L886 246.7L886.5 251.2L887 250.6L887.5 249.8L888 247.9L888.5 244.7L889 243.2L889.5 238.4L890 245.2L890.5 247.7L891 250L891.5 250.7L892 251.6L892.5 251L893 244.1L893.5 227.2L894 207.5L894.5 167.6L895 207L895.5 227.1L896 244.2L896.5 250.5L897 251.2L897.5 251L898 250.3L898.5 248.2L899 245.3L899.5 240.5L900 246.7L900.5 249.5L901 250.8L901.5 251.2L902 251.5L902.5 250.1L903 233.7L903.5 214.4L904 166.6L904.5 198.7L905 222.1L905.5 240.5L906 252.6L906.5 252.1L907 252L907.5 249.1L908 247.4L908.5 242.6L909 245.8L909.5 247.7L910 250.1L910.5 252.1L911 252.2L911.5 248.6L912 233L912.5 213.9L913 172.9L913.5 207.2L914 226.8L914.5 243.4L915 252.1L915.5 252.4L916 252.2L916.5 249.6L917 246.3L917.5 243.7L918 249.3L918.5 250.9L919 251.8L919.5 251.4L920 242L920.5 227.3L921 207.5L921.5 178.8L922 219.7L922.5 236.1L923 249.9L923.5 251.1L924 250.8L924.5 249.6L925 247.5L925.5 244.7L926 249.8L926.5 250.9L927 252.9L927.5 249.8L928 237.3L928.5 222.7L929 190.1L929.5 217.5L930 233.2L930.5 245.3L931 252.2L931.5 251.8L932 250.5L932.5 248.7L933 246.8L933.5 251.1L934 251.8L934.5 253.1L935 245.5L935.5 233.1L936 217.3L936.5 196.4L937 228.6L937.5 240.6L938 251.3L938.5 250.7L939 250.4L939.5 249.6L940 246.8L940.5 249.7L941 250.5L941.5 251.5L942 241.7L942.5 229.2L943 199.6L943.5 220.9L944 235.3L944.5 245.4L945 252.5L945.5 252L946 252.1L946.5 253.9L947 252.1L947.5 252.5L948 250.7L948.5 239.9L949 228.8L949.5 202.7L950 224.3L950.5 237.1L951 248.5L951.5 254.2L952 253.7L952.5 252.5L953 252.7L953.5 252.7L954 251.3L954.5 242.2L955 231.7L955.5 204.8L956 222.7L956.5 235.9L957 245.6L957.5 253L958 253.9L958.5 254.7L959 254.6L959.5 253.7L960 250.4L960.5 241.7L961 230.5L961.5 210.1L962 231.4L962.5 242.1L963 249.7L963.5 252.9L964 253L964.5 253.7L965 253.6L965.5 250L966 241.9L966.5 232L967 212.6L967.5 232.7L968 242.7L968.5 250.1L969 252.3L969.5 253.8L970 253.5L970.5 253.5L971 247.1L971.5 238.9L972 228L972.5 215.3L973 238L973.5 247.5L974 255.5L974.5 254.8L975 254.7L975.5 254.4L976 247.9L976.5 239.5L977 229.9L977.5 217.4L978 237.9L978.5 246.7L979 255.1L979.5 253.9L980 252.8L980.5 250.8L981 244.9L981.5 238.5L982 221.6L982.5 234.6L983 243.5L983.5 250L984 252.6L984.5 252.5L985 255.8L985.5 249.4L986 242.6L986.5 234L987 224.5L987.5 242.4L988 248.3L988.5 253.4L989 254.5L989.5 253.3L990 248.2L990.5 243L991 227.3L991.5 236.4L992 243.3L992.5 248.9L993 253.6L993.5 253.6L994 252.7L994.5 248L995 240.7L995.5 227.9L996 239.8L996.5 246.1L997 252.7L997.5 254.3L998 252.8L998.5 248.2L999 243.4L999.5 230.8L1000 239.9L1000.5 246.3L1001 251.2L1001.5 255.2L1002 254L1002.5 249.8L1003 244.4L1003.5 232.7L1004 240.5L1004.5 247.3L1005 252.8L1005.5 255.5L1006 252.7L1006.5 248L1007 243L1007.5 232.7L1008 242.8L1008.5 247.9L1009 251.3L1009.5 253.6L1010 250.1L1010.5 245.8L1011 230.4L1011.5 238.7L1012 246.1L1012.5 250.9L1013 253.5L1013.5 253.5L1014 252.7L1014.5 250.7L1015 247.8L1015.5 251.8L1016 253.1L1016.5 253.9L1017 253.1L1017.5 251.1L1018 249.1L1018.5 245.8L1019 249.8L1019.5 252L1020 253.8L1020.5 253.1L1021 252.3L1021.5 250.3L1022 247.8L1022.5 252.2L1023 253.8L1023.5 255.1L1024 252.8L1024.5 251.9L1025 249.3L1025.5 251.3L1026 252.4L1026.5 254.2L1027 253.7L1027.5 250.5L1028 248.9L1028.5 246.8L1029 251L1029.5 252.6L1030 254.6L1030.5 253.8L1031 251.3L1031.5 248.5L1032 251.7L1032.5 253.5L1033 254.5L1033.5 253.7L1034 252.7L1034.5 250L1035 252.7L1035.5 254.6L1036 255.5L1036.5 253.9L1037 252.2L1037.5 248.9L1038 252L1038.5 253.6L1039 254.8L1039.5 254.2L1040 252.3L1040.5 250.6L1041 253.1L1041.5 253.9L1042 253.1L1042.5 251.6L1043 246L1043.5 246L1044 241.3L1044.5 247.8L1045 251.2L1045.5 253L1046 250.6L1046.5 252.6L1047 253.7L1047.5 254L1048 253.2L1048.5 249.1L1049 247.6L1049.5 241.3L1050 248.4L1050.5 250.8L1051 250.6L1051.5 247.8L1052 252.2L1052.5 253.9L1053 253.8L1053.5 252.8L1054 251.4L1054.5 253.9L1055 253.6L1055.5 253.8L1056 254.5L1056.5 255.9L1057 255.4L1057.5 256L1058 255.6L1058.5 255.9L1059 254.3L1059.5 255.6L1060 255.2L1060.5 254L1061 256.3L1061.5 256.5L1062 254.3L1062.5 253.6L1063 256.1L1063.5 256.7L1064 256.6L1064.5 256.8L1065 256.5L1065.5 254.2L1066 254.3L1066.5 255.5L1067 255.8L1067.5 255.1L1068 254.5L1068.5 255.8L1069 254.7L1069.5 255.5L1070 255.2L1070.5 253L1071 250L1071.5 252.7L1072 254.5L1072.5 254.3L1073 254.3L1073.5 254.3L1074 254.1L1074.5 254.8L1075 254.9L1075.5 254.5L1076 255.1L1076.5 254.3L1077 256.3L1077.5 257.4L1078 254.2L1078.5 253L1079 251L1079.5 253.6L1080 253.9L1080.5 255.5L1081 255.3L1081.5 255.3L1082 255.8L1082.5 255.8L1083 254.8L1083.5 256L1084 256.6L1084.5 255.3L1085 256.3L1085.5 257.7L1086 256.1L1086.5 255.4L1087 255.8L1087.5 255.7L1088 256.4L1088.5 253.9L1089 254.9L1089.5 256.6L1090 257.2L1090.5 256.9L1091 254.7L1091.5 254.9L1092 255.3L1092.5 255.8L1093 254.5L1093.5 254.6L1094 256.7L1094.5 255.8L1095 255.7L1095.5 255.5L1096 255.3L1096.5 255.5L1097 255.5L1097.5 256.5L1098 256.5L1098.5 253.9L1099 251.4L1099.5 253.8L1100 255.3L1100.5 257.8L1101 258L1101.5 255.4L1102 255.7L1102.5 256.6L1103 257.3L1103.5 257.1L1104 256.5L1104.5 256.2L1105 256L1105.5 256.4L1106 256.7L1106.5 256.2L1107 255.6L1107.5 255.8L1108 254.5L1108.5 254.8L1109 255.6L1109.5 256.4L1110 255.4L1110.5 256.2L1111 257.8L1111.5 257.6L1112 255.9L1112.5 256.5L1113 255.5L1113.5 255.2L1114 256.3L1114.5 254.8L1115 252.1L1115.5 254.1L1116 256.6L1116.5 256.3L1117 254.6L1117.5 254.4L1118 255.7L1118.5 256L1119 255.6L1119.5 254.8L1120 253.5L1120.5 254.9L1121 255L1121.5 255.6L1122 255.7L1122.5 256.5L1123 257.2L1123.5 256.1L1124 256.5L1124.5 255.8L1125 256L1125.5 256.3L1126 256.1L1126.5 256.4L1127 256.1L1127.5 255.1L1128 252.8L1128.5 255.3L1129 256.5L1129.5 256L1130 256.9L1130.5 256.3L1131 256.7L1131.5 256.6L1132 255.1L1132.5 257.1L1133 257L1133.5 255.6L1134 256.7L1134.5 256.2L1135 255.5L1135.5 256.2L1136 255.3L1136.5 256.5L1137 256.3L1137.5 256L1138 257.2L1138.5 256.9L1139 255.8L1139.5 254.1L1140 252.1L1140.5 254.9L1141 255.9L1141.5 255.1L1142 256.2L1142.5 255.9L1143 257.1L1143.5 256.9L1144 256.1L1144.5 255.9L1145 256.6L1145.5 258.2L1146 258.6L1146.5 256L1147 255.3L1147.5 256.8L1148 255.9L1148.5 256.4L1149 257.3L1149.5 257.7L1150 255.9L1150.5 253.9L1151 256L1151.5 256.6L1152 255.3L1152.5 253.9L1153 257.1L1153.5 257.5L1154 255.7L1154.5 257.2L1155 256.8L1155.5 255.9L1156 255.6L1156.5 256.4L1157 256.3L1157.5 256.6L1158 256.1L1158.5 255.8L1159 256.6L1159.5 257.8L1160 255.7L1160.5 254.5L1161 255L1161.5 256.4L1162 257L1162.5 255.1L1163 254.8L1163.5 256.7L1164 256.8L1164.5 256.2L1165 256.5L1165.5 257.3L1166 255.8L1166.5 255.2L1167 256.2L1167.5 257.9L1168 257.8L1168.5 256.7L1169 255.7L1169.5 256.2L1170 255.7L1170.5 254L1171 250.5L1171.5 245.6L1172 231.5L1172.5 245.2L1173 250.8L1173.5 254.6L1174 255L1174.5 255.6L1175 257.4L1175.5 255.1L1176 254.8L1176.5 256.5L1177 256.8L1177.5 257.8L1178 256.7L1178.5 255.8L1179 254.9L1179.5 254.6L1180 255.1L1180.5 254.9L1181 256L1181.5 257L1182 256.8L1182.5 257.6L1183 257.3L1183.5 256.8L1184 256.1L1184.5 256.1L1185 258.1L1185.5 257.6L1186 255.3L1186.5 257.3L1187 258.2L1187.5 256.9L1188 257.6L1188.5 257.7L1189 256.8L1189.5 257.6L1190 257L1190.5 256L1191 257.1L1191.5 255.5L1192 252.7L1192.5 250.6" fill="none" stroke="#34bcd0" stroke-width="1.150" stroke-linejoin="round"/>
<path d="M125.8 109.8L128.4 103.7L131 102.6L133 106.8L135.3 114L139.1 94.1L142.9 102.9L145.2 112.9L148.3 169.5L150.6 98.4L154 91L156.4 99.9L159 100.6L162.8 106L165.4 112.9L167.7 107.2L169.7 111.4L172 106.8L174.6 99.1L176.6 102.9L178.4 99.6L180.4 105.2L183 117.5L184.6 115.9L186.2 121.3L189.1 108.3L191.9 101.4L193.9 107.5L195.7 117.5L197.7 105.2L199.5 109.8L203.4 110.6L204.9 110.6L206.9 99.6L208.7 102.9L210.6 112.9L213 98L214.8 102.9L216.7 126.6L218.7 106.8L220.7 109.1L223.3 105.2L225.5 108.3L227.8 113.6L229.8 107.2L232.4 112.1L235 107.2L237.5 117.5L240.8 111.4L243.1 116.7L244.7 112.9L247 119.8L249.3 117.5L252.3 135.1L254.6 105.2L255.8 124.4L256.6 103.7L258.4 133.5L260 118.2L262 141.9L263 112.9L264.6 130.5L268.1 112.4L270.7 177.1L273 124.4L276 116.7L276.8 118.2L277.4 123.3L278.1 119.4L278.7 126.6L279.3 115.7L279.9 119.2L280.5 124.8L281.2 119.5L281.8 115.4L282.4 112L283 135.2L283.6 118.6L284.3 121.7L284.9 125.7L285.5 135.3L286.1 116.9L286.7 134.3L287.4 122L288 117.2L288.6 137.3L289.2 128.6L289.8 135.7L290.5 125.3L291.1 116.8L291.7 120.7L292.3 139.7L292.9 145.2L293.6 123.1L294.2 117.3L294.8 125.4L295.4 133.5L296 126.6L296.7 128.9L297.3 130.4L297.9 134.2L298.5 126.7L299.1 127.4L299.8 150.2L300.4 131.4L301 138.8L301.6 133.6L302.2 122.3L302.9 131.9L303.5 140.6L304.1 121.9L304.7 127.7L305.3 117.1L306 131.1L306.6 134.9L307.2 141.7L307.8 123.1L308.4 114.9L309.1 138L309.7 137L310.3 128.8L310.9 138.6L311.5 135L312.2 149.4L312.8 132.2L313.4 127.8L314 133.7L314.6 127.8L315.3 137L315.9 144.6L316.5 162.6L317.1 144.4L317.7 129.4L318.4 150L319 141.1L319.6 131.6L320.2 126.4L320.8 130L321.5 128.8L322.1 154.4L322.7 140.7L323.3 141.1L323.9 139.6L324.6 144L325.2 140.3L325.8 137.4L326.4 135.2L327 139.3L327.7 150.1L328.3 146.9L328.9 136L329.5 140L330.1 133.9L330.8 142.3L331.4 143L332 124.8L332.6 133.4L333.2 126.4L333.9 124.6L334.5 144.3L335.1 136.5L335.7 146.7L336.3 135.7L337 136L337.6 138.5L338.2 138.8L338.8 149.9L339.4 141.4L340.1 145.3L340.7 139.8L341.3 143.9L341.9 137L342.5 135.9L343.2 139.4L343.8 139.5L344.4 141.1L345 144.7L345.6 143.1L346.3 145.4L346.9 139.9L347.5 142.5L348.1 139.1L348.7 151.3L349.4 149.7L350 148.1L350.6 148.1L351.2 144.9L351.8 147.3L352.5 142.1L353.1 147.7L353.7 151L354.3 149.8L354.9 136.6L355.6 152.9L356.2 152.3L356.8 145.2L357.4 155L358 134.6L358.7 155.1L359.3 143.1L359.9 142.9L360.5 160.3L361.1 144.7L361.8 140.7L362.4 144.1L363 145.5L363.6 141.6L364.2 146.5L364.9 145.6L365.5 148.6L366.1 144.2L366.7 153.8L367.3 143.7L368 151.5L368.6 155.2L369.2 146.8L369.8 139.1L370.4 143.6L371.1 152.5L371.7 145.6L372.3 152.5L372.9 150.7L373.5 149.7L374.2 163.6L374.8 154.6L375.4 156.5L376 154.8L376.6 159.3L377.3 159.7L377.9 156.7L378.5 147L379.1 142.6L379.7 152.1L380.4 146.1L381 153.7L381.6 162.8L382.2 151.8L382.8 150.4L383.5 155.3L384.1 151.5L384.7 150.3L385.3 158.1L385.9 161.4L386.6 155L387.2 155.1L387.8 156L388.4 149.3L389 145.7L389.7 156.8L390.3 151.4L390.9 150.3L391.5 152L392 150.7L392.5 154.7L393 154.6L393.5 149.9L394 151L394.5 156.4L395 155.9L395.5 152.7L396 153.9L396.5 157.7L397 154.4L397.5 157.8L398 158.2L398.5 156.9L399 160.5L399.5 157L400 155.5L400.5 160.4L401 158.9L401.5 158.7L402 163.8L402.5 163.4L403 159.6L403.5 157.5L404 158.2L404.5 159.3L405 158.7L405.5 159.8L406 157.9L406.5 158.3L407 159.7L407.5 159.1L408 162.4L408.5 164.2L409 158.9L409.5 158.4L410 161.7L410.5 161.4L411 162.5L411.5 162.2L412 163.3L412.5 162.8L413 165.6L413.5 162.2L414 162.1L414.5 167.3L415 166L415.5 164.6L416 163.9L416.5 166L417 164.8L417.5 156L418 162L418.5 165.6L419 164.9L419.5 164.9L420 168.6L420.5 170.2L421 166.1L421.5 165L422 162.4L422.5 165.2L423 166.7L423.5 160.1L424 164.1L424.5 169.6L425 168.1L425.5 167.2L426 165.5L426.5 166L427 168.9L427.5 168.3L428 162.3L428.5 162L429 172.1L429.5 172.4L430 170.5L430.5 168.7L431 168.5L431.5 165.6L432 164.9L432.5 166.5L433 168.1L433.5 169.7L434 169.4L434.5 167.2L435 167.7L435.5 170.6L436 168.7L436.5 168.9L437 171L437.5 172.9L438 173.5L438.5 173.6L439 177.9L439.5 173.6L440 169.8L440.5 172L441 170.7L441.5 170.4L442 171.4L442.5 176.9L443 176.3L443.5 172.3L444 169.4L444.5 167.8L445 168.4L445.5 173.8L446 178.9L446.5 175.2L447 173L447.5 172L448 173L448.5 173.8L449 176.6L449.5 175.2L450 174.6L450.5 174.4L451 173.3L451.5 174.3L452 174.4L452.5 174.5L453 173.7L453.5 173.3L454 175.6L454.5 177L455 173.1L455.5 173.7L456 174.1L456.5 173.9L457 176.4L457.5 177.9L458 176.7L458.5 175.6L459 175L459.5 177.9L460 179L460.5 177.5L461 174.2L461.5 179L462 178.9L462.5 177.5L463 177.1L463.5 177.6L464 177.3L464.5 174.5L465 175.3L465.5 176.6L466 176.7L466.5 178.7L467 178L467.5 177.9L468 179.8L468.5 179.3L469 178.9L469.5 177.6L470 178L470.5 179.7L471 177.2L471.5 175.9L472 176.1L472.5 176.9L473 178.8L473.5 180.1L474 180.3L474.5 178.3L475 178.4L475.5 181.7L476 181.2L476.5 181.9L477 180.9L477.5 181.5L478 183L478.5 181L479 180L479.5 182.6L480 180.6L480.5 176.2L481 180.3L481.5 179L482 179.5L482.5 181.8L483 181.2L483.5 182.8L484 180.1L484.5 178.6L485 181.3L485.5 181.9L486 183.3L486.5 182.9L487 179.9L487.5 182.6L488 183.4L488.5 181.3L489 179.5L489.5 178.2L490 180.6L490.5 182.9L491 181.5L491.5 181.5L492 182.3L492.5 180.3L493 178.1L493.5 179.7L494 181.8L494.5 181.2L495 184L495.5 183.8L496 183.5L496.5 179.6L497 178.8L497.5 181.3L498 182.4L498.5 186L499 183.7L499.5 179.4L500 181.9L500.5 182.1L501 180.7L501.5 183.9L502 182.6L502.5 179.7L503 180.9L503.5 182.4L504 181.5L504.5 184L505 183.9L505.5 181L506 183.4L506.5 182.4L507 182.3L507.5 185.9L508 184.8L508.5 184.1L509 183.2L509.5 184.1L510 182.4L510.5 182.8L511 183L511.5 183.3L512 183.8L512.5 181.5L513 181.5L513.5 183.2L514 185L514.5 182.5L515 180.9L515.5 182.8L516 183L516.5 184.2L517 185.3L517.5 185.1L518 183.3L518.5 182.4L519 183.9L519.5 182.8L520 181.4L520.5 182.2L521 181.7L521.5 182.7L522 183.6L522.5 182.7L523 182.9L523.5 182.3L524 184.3L524.5 182.5L525 182.8L525.5 183.4L526 183.6L526.5 181L527 177.3L527.5 176L528 175.8L528.5 178.7L529 179.5L529.5 178.3L530 178.6L530.5 176.4L531 175.8L531.5 176.9L532 176.5L532.5 178.1L533 179.7L533.5 180.3L534 179.5L534.5 179.6L535 180.5L535.5 180.5L536 183.7L536.5 185L537 183.5L537.5 184.8L538 185L538.5 182.3L539 180.9L539.5 180.9L540 182.2L540.5 183.4L541 182L541.5 182.7L542 183L542.5 181.2L543 182.5L543.5 184.2L544 183.6L544.5 182.3L545 182L545.5 182.5L546 182.2L546.5 184.6L547 185.4L547.5 183.5L548 184L548.5 185.4L549 185.6L549.5 185.1L550 184L550.5 184.4L551 183.5L551.5 180.7L552 181.8L552.5 181.5L553 181.6L553.5 184.1L554 184.1L554.5 184.3L555 182.8L555.5 183.7L556 182.2L556.5 181.1L557 184.8L557.5 183.5L558 180.4L558.5 182.6L559 182.3L559.5 184.2L560 184L560.5 184.6L561 183.6L561.5 184.5L562 187.3L562.5 184.4L563 179.8L563.5 181.7L564 182.3L564.5 182L565 183.1L565.5 182.3L566 180.4L566.5 182.9L567 183L567.5 181.9L568 184.1L568.5 181.9L569 179.2L569.5 182.3L570 181.4L570.5 181.3L571 182.8L571.5 181.1L572 181.3L572.5 182.1L573 180.7L573.5 180L574 180.6L574.5 183.5L575 185.4L575.5 182.5L576 182.8L576.5 183.1L577 183.7L577.5 183.6L578 184.1L578.5 181.7L579 182.5L579.5 183.4L580 182.8L580.5 181.3L581 183.1L581.5 183.5L582 182.7L582.5 182L583 181.5L583.5 182.5L584 182.4L584.5 182.5L585 182.1L585.5 182L586 183L586.5 182.7L587 181.8L587.5 179.5L588 181.1L588.5 182.2L589 180.3L589.5 183.3L590 185.4L590.5 184.6L591 183L591.5 179.5L592 179.9L592.5 180.4L593 181.3L593.5 184.7L594 186.1L594.5 182.4L595 181L595.5 183.1L596 181.6L596.5 182.6L597 181.7L597.5 179.5L598 181.5L598.5 183.4L599 181.6L599.5 182.2L600 181.5L600.5 182.3L601 181.6L601.5 181L602 181.9L602.5 182.8L603 181.9L603.5 183.3L604 183L604.5 182.1L605 181L605.5 182.2L606 180.5L606.5 180.6L607 182.7L607.5 180.7L608 178.8L608.5 180.4L609 182.3L609.5 181.8L610 181.9L610.5 182L611 179.9L611.5 179.8L612 180.8L612.5 180.7L613 180.9L613.5 180.3L614 179.7L614.5 180.8L615 181.2L615.5 178.6L616 179L616.5 180.9L617 179.1L617.5 179.6L618 181.9L618.5 180.9L619 181.3L619.5 181.9L620 180.8L620.5 180.7L621 181.6L621.5 181.8L622 181.7L622.5 180L623 180.7L623.5 181.7L624 179.2L624.5 179.9L625 179.6L625.5 178.5L626 180L626.5 182L627 181.1L627.5 179.7L628 179.3L628.5 179.9L629 179.4L629.5 178.5L630 180.6L630.5 179.8L631 179.5L631.5 180.9L632 181.1L632.5 178.9L633 178.4L633.5 181.4L634 181.4L634.5 180.4L635 180.6L635.5 180.9L636 181.9L636.5 180.4L637 180.6L637.5 181.2L638 181L638.5 181.2L639 180L639.5 179.5L640 180.6L640.5 181.4L641 181.1L641.5 179.6L642 179.5L642.5 179.8L643 180.3L643.5 180.5L644 180L644.5 181.5L645 179.7L645.5 179.8L646 181L646.5 179.2L647 179.1L647.5 179.9L648 180.6L648.5 181.7L649 180.8L649.5 179L650 180.2L650.5 179.5L651 180.4L651.5 181.4L652 180.2L652.5 180L653 179.7L653.5 180.5L654 181.5L654.5 182.4L655 182.3L655.5 181.8L656 182.1L656.5 180.9L657 180.7L657.5 182.3L658 179.5L658.5 179.8L659 181.9L659.5 180.2L660 179L660.5 181L661 182.5L661.5 182.4L662 180.6L662.5 180.7L663 181.9L663.5 181.7L664 180.4L664.5 181.8L665 182.5L665.5 182.8L666 180.7L666.5 179.2L667 180.2L667.5 181.5L668 181.6L668.5 183.4L669 183L669.5 183.1L670 184L670.5 183.6L671 183.1L671.5 182.3L672 181.9L672.5 182.2L673 183.5L673.5 183.1L674 183L674.5 182.6L675 183.7L675.5 186.2L676 185.6L676.5 182.6L677 182.7L677.5 184.2L678 183.9L678.5 183.8L679 184.2L679.5 185.1L680 185.3L680.5 185L681 185.8L681.5 186.7L682 186.1L682.5 185.1L683 185L683.5 185.5L684 185.7L684.5 184.3L685 185.2L685.5 185.9L686 185L686.5 186.1L687 187L687.5 186.5L688 185.8L688.5 186.6L689 187.4L689.5 187.7L690 188.9L690.5 188L691 188.1L691.5 190L692 189.8L692.5 190.4L693 190.9L693.5 190L694 190.4L694.5 189.7L695 190.8L695.5 190.9L696 190.2L696.5 189.6L697 189.8L697.5 190.8L698 191.4L698.5 191.8L699 191.3L699.5 192.2L700 192.4L700.5 192.5L701 192.8L701.5 193.2L702 192L702.5 193.1L703 194L703.5 193.8L704 193.7L704.5 193.9L705 194.2L705.5 194.1L706 195.8L706.5 196.1L707 196.5L707.5 196.3L708 196.8L708.5 197.5L709 197L709.5 195.9L710 196L710.5 196.8L711 196.4L711.5 197.7L712 199.7L712.5 199.4L713 198.8L713.5 198L714 197L714.5 199.1L715 198.4L715.5 197.6L716 198.8L716.5 199.6L717 198.8L717.5 199.7L718 201.3L718.5 201.4L719 202.4L719.5 202.1L720 202L720.5 202.2L721 202.3L721.5 203.4L722 202.8L722.5 203.5L723 203.5L723.5 204.6L724 204.6L724.5 204.8L725 205.1L725.5 205.4L726 206.9L726.5 207.1L727 206.2L727.5 205.6L728 207L728.5 208.5L729 208.3L729.5 207.6L730 207.9L730.5 208.4L731 207.7L731.5 207.2L732 207.6L732.5 209L733 209.3L733.5 209.3L734 210.4L734.5 209.8L735 209.6L735.5 210.5L736 209.9L736.5 209.8L737 210.2L737.5 210.3L738 210.7L738.5 212.3L739 212.9L739.5 211.9L740 212.7L740.5 213.2L741 212.9L741.5 212.4L742 212.3L742.5 212.9L743 213.9L743.5 214L744 214L744.5 214.8L745 214.5L745.5 214.6L746 216L746.5 215.5L747 215.9L747.5 216.2L748 217.4L748.5 217.6L749 217.8L749.5 218.4L750 219.2L750.5 217.5L751 217.5L751.5 218.4L752 218.1L752.5 218.7L753 219L753.5 220.1L754 220.2L754.5 220.2L755 220.2L755.5 220.3L756 221.5L756.5 222.6L757 222.6L757.5 221.6L758 221.3L758.5 221.7L759 223.3L759.5 224.8L760 224.2L760.5 223.5L761 223.8L761.5 223.7L762 223.9L762.5 224.9L763 225.3L763.5 224.9L764 224.8L764.5 225.2L765 224.2L765.5 225L766 226L766.5 226.7L767 227.1L767.5 226.6L768 226.5L768.5 227.2L769 227.4L769.5 227.6L770 229.1L770.5 230.8L771 228.5L771.5 227.6L772 228.9L772.5 230.4L773 231L773.5 229.7L774 231.2L774.5 231.7L775 230.4L775.5 230.6L776 230.8L776.5 231.3L777 230.5L777.5 231.8L778 233.5L778.5 233L779 232L779.5 232.6L780 232.8L780.5 233.6L781 234.8L781.5 233.9L782 233.1L782.5 233.3L783 234.7L783.5 236.1L784 236.6L784.5 236.3L785 235.8L785.5 235.8L786 237.2L786.5 237.3L787 237L787.5 237.2L788 237.4L788.5 237.7L789 237.5L789.5 237.6L790 237.8L790.5 238.4L791 238.3L791.5 238.4L792 239.8L792.5 239.2L793 238.9L793.5 238.6L794 238.9L794.5 239.4L795 239.4L795.5 239.5L796 240L796.5 241.1L797 239.7L797.5 240.4L798 241.1L798.5 240.3L799 240.2L799.5 240.3L800 240.3L800.5 240.1L801 240.6L801.5 239.7L802 241L802.5 241.9L803 241.9L803.5 242.4L804 242.1L804.5 241.3L805 242.2L805.5 243.2L806 242.5L806.5 242.2L807 241.6L807.5 241.6L808 242.5L808.5 243.2L809 243.2L809.5 243.3L810 244.2L810.5 244L811 243.6L811.5 243.8L812 244.1L812.5 243L813 242.9L813.5 243.2L814 244.1L814.5 245L815 244.8L815.5 244.3L816 244.6L816.5 244.8L817 244.2L817.5 244.2L818 245.2L818.5 245.5L819 245.5L819.5 245.2L820 245.7L820.5 245.8L821 245L821.5 245.2L822 246L822.5 246.3L823 245.9L823.5 245.5L824 245.3L824.5 245.7L825 246.8L825.5 245.8L826 245.4L826.5 245.8L827 245.9L827.5 246.7L828 246.9L828.5 246.3L829 245.8L829.5 246.1L830 248.2L830.5 247.8L831 246.5L831.5 245.8L832 245.8L832.5 245.1L833 245.1L833.5 245.6L834 245.9L834.5 247.4L835 247L835.5 246.4L836 247.2L836.5 247L837 246.8L837.5 247.4L838 247.5L838.5 247.5L839 247.4L839.5 247.6L840 247.4L840.5 248.4L841 248.5L841.5 248.7L842 248.6L842.5 247.6L843 247.6L843.5 247.9L844 247.9L844.5 247L845 248L845.5 248L846 248.6L846.5 248.9L847 248.2L847.5 248.6L848 248.4L848.5 247.8L849 248.7L849.5 248.8L850 248.6L850.5 249.6L851 249.2L851.5 248.9L852 248L852.5 248.5L853 247.9L853.5 248.2L854 247.7L854.5 247.6L855 248.2L855.5 248.1L856 247.9L856.5 247.6L857 247.3L857.5 248.4L858 249.6L858.5 250.8L859 250.1L859.5 248.7L860 248.5L860.5 248.8L861 249.2L861.5 249.5L862 249.5L862.5 249L863 250L863.5 249.4L864 249.7L864.5 249.9L865 249.7L865.5 249.7L866 250.1L866.5 250.4L867 250L867.5 250.1L868 248.5L868.5 248.8L869 250L869.5 250.1L870 250.4L870.5 251.4L871 250.7L871.5 249.6L872 250.4L872.5 250.3L873 250.4L873.5 250.3L874 249.7L874.5 249.5L875 249.5L875.5 250.2L876 249.7L876.5 249.9L877 250L877.5 249.6L878 250L878.5 251L879 250.3L879.5 250.6L880 251.1L880.5 251.2L881 250.2L881.5 250.1L882 251.7L882.5 250.8L883 249L883.5 248.7L884 250.1L884.5 250.7L885 250.2L885.5 249.9L886 250.3L886.5 251.2L887 250.6L887.5 250L888 251.2L888.5 251.4L889 250.7L889.5 250.7L890 250.5L890.5 250.2L891 250.2L891.5 250.7L892 251.6L892.5 251L893 249.9L893.5 249.3L894 250.2L894.5 251L895 250.2L895.5 249.7L896 250.3L896.5 250.5L897 251.2L897.5 251L898 251.3L898.5 251.5L899 251.3L899.5 251.5L900 252.5L900.5 252.4L901 251.4L901.5 251.2L902 251.5L902.5 251.2L903 250.8L903.5 250.6L904 251.5L904.5 251.7L905 251.6L905.5 252L906 252.6L906.5 252.1L907 252L907.5 250.6L908 250.8L908.5 251.7L909 251.9L909.5 250.7L910 251.4L910.5 252.1L911 252.2L911.5 252L912 251.8L912.5 251.1L913 252.1L913.5 252.3L914 250.8L914.5 251.5L915 252.1L915.5 252.4L916 253.8L916.5 253L917 251.3L917.5 251.7L918 253.2L918.5 252.5L919 251.8L919.5 251.4L920 251.1L920.5 251.9L921 251.9L921.5 253L922 252.2L922.5 251.6L923 251.4L923.5 251.1L924 251.9L924.5 252.4L925 252.8L925.5 253.9L926 253.2L926.5 252.3L927 252.9L927.5 252.3L928 252L928.5 252L929 252.7L929.5 253.8L930 252.6L930.5 251.7L931 252.2L931.5 252.7L932 252.8L932.5 252.7L933 252.8L933.5 254L934 252.8L934.5 253.1L935 253.4L935.5 252.9L936 252.5L936.5 253.5L937 252.5L937.5 251.7L938 251.8L938.5 251.5L939 252.6L939.5 255L940 253.8L940.5 251.7L941 251.4L941.5 252.5L942 253L942.5 252.6L943 253.8L943.5 254L944 253.5L944.5 252L945 252.5L945.5 252L946 252.1L946.5 253.9L947 252.1L947.5 252.5L948 252.9L948.5 251.4L949 252.5L949.5 253.9L950 252.7L950.5 252.4L951 253.7L951.5 254.2L952 253.7L952.5 252.5L953 252.7L953.5 252.7L954 251.6L954.5 251.4L955 251.5L955.5 251.5L956 253.6L956.5 253L957 252.3L957.5 253L958 253.9L958.5 254.7L959 254.6L959.5 253.7L960 254L960.5 254.3L961 254L961.5 253L962 253.1L962.5 253.5L963 252.4L963.5 252.9L964 253L964.5 253.7L965 253.6L965.5 253.1L966 253.1L966.5 253.6L967 254.3L967.5 254.1L968 253.8L968.5 252.9L969 252.3L969.5 253.8L970 253.5L970.5 253.5L971 253.3L971.5 253.6L972 254.8L972.5 253.5L973 252.7L973.5 254.2L974 255.5L974.5 254.8L975 254.7L975.5 254.4L976 253.3L976.5 252.2L977 253.1L977.5 252.8L978 252.1L978.5 253.4L979 255.1L979.5 253.9L980 252.8L980.5 251.6L981 251.5L981.5 252.4L982 252.1L982.5 253.7L983 254.1L983.5 253.9L984 252.6L984.5 252.5L985 255.8L985.5 254.3L986 253.8L986.5 253.7L987 253.8L987.5 253.9L988 253.3L988.5 253.4L989 254.5L989.5 253.3L990 252.9L990.5 253.8L991 253.4L991.5 254L992 252.8L992.5 252.9L993 253.6L993.5 253.6L994 254.6L994.5 255.4L995 254.5L995.5 253.7L996 252.8L996.5 253L997 254.7L997.5 254.3L998 253.2L998.5 252.9L999 253.4L999.5 255L1000 253.9L1000.5 254.2L1001 254.1L1001.5 255.2L1002 254.5L1002.5 254.5L1003 253.8L1003.5 252.3L1004 252.4L1004.5 254.6L1005 255.7L1005.5 255.5L1006 254.3L1006.5 253.7L1007 254L1007.5 254L1008 253.8L1008.5 253.6L1009 252.7L1009.5 253.6L1010 254.3L1010.5 255.8L1011 256.5L1011.5 255.7L1012 255.7L1012.5 254.9L1013 253.5L1013.5 254.3L1014 255.1L1014.5 255.1L1015 254.7L1015.5 254.9L1016 254.5L1016.5 254.1L1017 254.1L1017.5 253.7L1018 254.1L1018.5 254.4L1019 253.1L1019.5 253.7L1020 254L1020.5 254.1L1021 254.9L1021.5 255.2L1022 255.5L1022.5 255.1L1023 255.1L1023.5 255.3L1024 253.9L1024.5 254.1L1025 253.8L1025.5 253.9L1026 253.9L1026.5 254.7L1027 254.9L1027.5 252.5L1028 252.6L1028.5 253.5L1029 254L1029.5 253.9L1030 255.2L1030.5 256.1L1031 254.9L1031.5 253.9L1032 254.7L1032.5 255.2L1033 255.2L1033.5 255.1L1034 255.9L1034.5 256.6L1035 255.7L1035.5 256.3L1036 256.6L1036.5 255.9L1037 256.1L1037.5 255.2L1038 255.1L1038.5 255.2L1039 255.8L1039.5 256.1L1040 254.9L1040.5 254.4L1041 255.1L1041.5 254.9L1042 254.6L1042.5 254.7L1043 253.6L1043.5 254.5L1044 254.9L1044.5 254.4L1045 255L1045.5 256.1L1046 255.1L1046.5 254.5L1047 254.9L1047.5 255L1048 255L1048.5 255.8L1049 255.3L1049.5 256.4L1050 256.1L1050.5 256.3L1051 256.2L1051.5 254.7L1052 255L1052.5 255.7L1053 255L1053.5 255.1L1054 255.7L1054.5 255.7L1055 254.2L1055.5 253.9L1056 254.5L1056.5 255.9L1057 255.4L1057.5 256L1058 255.6L1058.5 255.9L1059 254.3L1059.5 255.6L1060 255.2L1060.5 254L1061 256.3L1061.5 256.5L1062 254.3L1062.5 253.6L1063 256.1L1063.5 256.7L1064 256.6L1064.5 256.8L1065 256.5L1065.5 254.2L1066 254.3L1066.5 255.5L1067 255.8L1067.5 255.1L1068 254.5L1068.5 255.8L1069 254.7L1069.5 255.5L1070 256.3L1070.5 255.2L1071 253.8L1071.5 254.8L1072 255.4L1072.5 254.3L1073 254.3L1073.5 254.3L1074 254.1L1074.5 254.8L1075 254.9L1075.5 254.5L1076 255.1L1076.5 254.3L1077 256.3L1077.5 257.4L1078 254.9L1078.5 254.5L1079 255.9L1079.5 255.7L1080 254.5L1080.5 255.5L1081 255.3L1081.5 255.3L1082 255.8L1082.5 255.8L1083 254.8L1083.5 256L1084 256.6L1084.5 255.3L1085 256.3L1085.5 257.7L1086 256.1L1086.5 255.4L1087 255.8L1087.5 255.7L1088 256.4L1088.5 253.9L1089 254.9L1089.5 256.6L1090 257.2L1090.5 256.9L1091 254.7L1091.5 254.9L1092 255.3L1092.5 255.8L1093 254.5L1093.5 254.6L1094 256.7L1094.5 255.8L1095 255.7L1095.5 255.5L1096 255.3L1096.5 255.5L1097 255.5L1097.5 256.5L1098 257.5L1098.5 255.8L1099 255.4L1099.5 255.7L1100 256L1100.5 257.8L1101 258L1101.5 255.4L1102 255.7L1102.5 256.6L1103 257.3L1103.5 257.1L1104 256.5L1104.5 256.2L1105 256L1105.5 256.4L1106 256.7L1106.5 256.2L1107 255.6L1107.5 255.8L1108 254.5L1108.5 254.8L1109 255.6L1109.5 256.4L1110 255.4L1110.5 256.2L1111 257.8L1111.5 257.6L1112 255.9L1112.5 256.5L1113 255.5L1113.5 255.2L1114 257.2L1114.5 257L1115 254.6L1115.5 255.7L1116 257.5L1116.5 256.3L1117 254.6L1117.5 254.4L1118 255.7L1118.5 256L1119 255.6L1119.5 254.8L1120 253.5L1120.5 254.9L1121 255L1121.5 255.6L1122 255.7L1122.5 256.5L1123 257.2L1123.5 256.1L1124 256.5L1124.5 255.8L1125 256L1125.5 256.3L1126 256.1L1126.5 256.4L1127 256.1L1127.5 255.1L1128 252.8L1128.5 255.3L1129 256.5L1129.5 256L1130 256.9L1130.5 256.3L1131 256.7L1131.5 256.6L1132 255.1L1132.5 257.1L1133 257L1133.5 255.6L1134 256.7L1134.5 256.2L1135 255.5L1135.5 256.2L1136 255.3L1136.5 256.5L1137 256.3L1137.5 256L1138 257.2L1138.5 256.9L1139 256.5L1139.5 255.6L1140 256.9L1140.5 257.2L1141 256.7L1141.5 255.1L1142 256.2L1142.5 255.9L1143 257.1L1143.5 256.9L1144 256.1L1144.5 255.9L1145 256.6L1145.5 258.2L1146 258.6L1146.5 256L1147 255.3L1147.5 256.8L1148 255.9L1148.5 256.4L1149 257.3L1149.5 257.7L1150 255.9L1150.5 253.9L1151 256L1151.5 256.6L1152 255.3L1152.5 253.9L1153 257.1L1153.5 257.5L1154 255.7L1154.5 257.2L1155 256.8L1155.5 255.9L1156 255.6L1156.5 256.4L1157 256.3L1157.5 256.6L1158 256.1L1158.5 255.8L1159 256.6L1159.5 257.8L1160 255.7L1160.5 254.5L1161 255L1161.5 256.4L1162 257L1162.5 255.1L1163 254.8L1163.5 256.7L1164 256.8L1164.5 256.2L1165 256.5L1165.5 257.3L1166 255.8L1166.5 255.2L1167 256.2L1167.5 257.9L1168 257.8L1168.5 256.7L1169 255.7L1169.5 256.2L1170 255.7L1170.5 255.7L1171 257L1171.5 259.2L1172 259L1172.5 258.4L1173 257.4L1173.5 256.2L1174 255L1174.5 255.6L1175 257.4L1175.5 255.1L1176 254.8L1176.5 256.5L1177 256.8L1177.5 257.8L1178 256.7L1178.5 255.8L1179 254.9L1179.5 254.6L1180 255.1L1180.5 254.9L1181 256L1181.5 257L1182 256.8L1182.5 257.6L1183 257.3L1183.5 256.8L1184 256.1L1184.5 256.1L1185 258.1L1185.5 257.6L1186 255.3L1186.5 257.3L1187 258.2L1187.5 256.9L1188 257.6L1188.5 257.7L1189 256.8L1189.5 257.6L1190 257L1190.5 256L1191 257.4L1191.5 257.2L1192 255.6L1192.5 256.1" fill="none" stroke="#ece21c" stroke-width="1.100" stroke-linejoin="round"/>
<text x="79.8" y="60.2" font-size="9.3" fill="#c0c0be" textLength="23.6" lengthAdjust="spacingAndGlyphs" xml:space="preserve">-50.00</text>
<text x="79.8" y="75.2" font-size="9.3" fill="#c0c0be" textLength="23.6" lengthAdjust="spacingAndGlyphs" xml:space="preserve">-60.00</text>
<text x="79.8" y="96.7" font-size="9.3" fill="#c0c0be" textLength="23.6" lengthAdjust="spacingAndGlyphs" xml:space="preserve">-70.00</text>
<text x="79.8" y="117.7" font-size="9.3" fill="#c0c0be" textLength="23.6" lengthAdjust="spacingAndGlyphs" xml:space="preserve">-80.00</text>
<text x="79.8" y="138.7" font-size="9.3" fill="#c0c0be" textLength="23.6" lengthAdjust="spacingAndGlyphs" xml:space="preserve">-90.00</text>
<text x="79.8" y="159.7" font-size="9.3" fill="#c0c0be" textLength="23.6" lengthAdjust="spacingAndGlyphs" xml:space="preserve">-100.0</text>
<text x="79.8" y="180.7" font-size="9.3" fill="#c0c0be" textLength="23.6" lengthAdjust="spacingAndGlyphs" xml:space="preserve">-110.0</text>
<text x="79.8" y="201.7" font-size="9.3" fill="#c0c0be" textLength="23.6" lengthAdjust="spacingAndGlyphs" xml:space="preserve">-120.0</text>
<text x="79.8" y="222.7" font-size="9.3" fill="#c0c0be" textLength="23.6" lengthAdjust="spacingAndGlyphs" xml:space="preserve">-130.0</text>
<text x="79.8" y="243.7" font-size="9.3" fill="#c0c0be" textLength="23.6" lengthAdjust="spacingAndGlyphs" xml:space="preserve">-140.0</text>
<text x="79.8" y="259.7" font-size="9.3" fill="#c0c0be" textLength="23.6" lengthAdjust="spacingAndGlyphs" xml:space="preserve">-150.0</text>
<path d="M114 154.2L120 155.6L126.5 156.2V157L120 157.6L114 159.2z" fill="#f0ea10"/>
<path d="M1204.5 154.2L1198.5 155.6L1193 156.2V157L1198.5 157.6L1204.5 159.2z" fill="#f0ea10"/>
<rect x="125" y="40.400" width="18" height="10.200" fill="#f6f200"/>
<text x="126.2" y="48.8" font-size="9.1" fill="#3a3600" textLength="15.8" lengthAdjust="spacingAndGlyphs" xml:space="preserve">Tr  1</text>
<text x="148.7" y="48.8" font-size="9.1" fill="#e2da26" textLength="120.1" lengthAdjust="spacingAndGlyphs" xml:space="preserve">PN LogM 10.00dB/  -100dBc/Hz</text>
<text x="665.2" y="48.8" font-size="9.1" fill="#36b8cc" textLength="143" lengthAdjust="spacingAndGlyphs" xml:space="preserve">Tr  2   PN LogM 10.00dB/  -100dBc/Hz</text>
<text x="137.5" y="261.2" font-size="9.1" fill="#a6a695" textLength="164.5" lengthAdjust="spacingAndGlyphs" xml:space="preserve">Ch 1  Carrier 100.061863 MHz   9.025 dBm</text>
<text x="126.2" y="270.6" font-size="9.1" fill="#c0c0be" textLength="8.1" lengthAdjust="spacingAndGlyphs" xml:space="preserve">1k</text>
<text x="386.2" y="270.6" font-size="9.1" fill="#c0c0be" textLength="13.1" lengthAdjust="spacingAndGlyphs" xml:space="preserve">10k</text>
<text x="650.5" y="270.6" font-size="9.1" fill="#c0c0be" textLength="18" lengthAdjust="spacingAndGlyphs" xml:space="preserve">100k</text>
<text x="920" y="270.6" font-size="9.1" fill="#c0c0be" textLength="11.5" lengthAdjust="spacingAndGlyphs" xml:space="preserve">1M</text>
<text x="1176.9" y="270.6" font-size="9.1" fill="#c0c0be" textLength="15.4" lengthAdjust="spacingAndGlyphs" xml:space="preserve">10M</text>
<text x="125.5" y="283.9" font-size="9.1" fill="#c0c0be" textLength="123.3" lengthAdjust="spacingAndGlyphs" xml:space="preserve">&gt;Ch1: Phase Noise  Start   1 kHz</text>
<path d="M256.3 280.7H280.5" stroke="#c4bc3c" stroke-width="1.2"/>
<path d="M287 280.7H311.3" stroke="#2fa4be" stroke-width="1.2"/>
<text x="1139.6" y="283.9" font-size="9.1" fill="#c0c0be" textLength="51.7" lengthAdjust="spacingAndGlyphs" xml:space="preserve">Stop  10 MHz</text>
<rect x="20.6" y="271.5" width="14.3" height="9.8" fill="#8e8e8e"/>
<text x="25.6" y="279.8" font-size="9" fill="#e0e0e0" textLength="4.4" lengthAdjust="spacingAndGlyphs" xml:space="preserve">1</text>
</svg></div>
<div class="win" style="left:2px;top:292px;width:599px;height:360px;background:#000"><svg class="plot" width="599" height="360" viewBox="2 292 599 360">
<path d="M63.5 308H594.5M63.5 340.6H594.5M63.5 373.3H594.5M63.5 405.9H594.5M63.5 438.6H594.5M63.5 471.2H594.5M63.5 503.9H594.5M63.5 536.5H594.5M63.5 569.2H594.5M63.5 601.9H594.5M63.5 634.5H594.5M63.5 308V634.5M116.6 308V634.5M169.7 308V634.5M222.8 308V634.5M275.9 308V634.5M329 308V634.5M382.1 308V634.5M435.2 308V634.5M488.3 308V634.5M541.4 308V634.5M594.5 308V634.5" fill="none" stroke="#464646" stroke-width="1" opacity="0.8"/>
<path d="M197.3 613.3V604.8M204.3 613.3V604.6M207.9 613.3V600.6M211.4 613.3V597.4M214.9 608.7V595.6M218.4 612.8V590.8M222 605.8V582.9M225.5 601.9V584.5M229 599.9V581.1M232.5 600.8V571.1M236.1 591.1V563.8M239.6 592.7V563.4M243.1 584.4V553.9M246.6 578.4V545.4M250.2 572V538.4M253.7 576V533.9M257.2 573V525M260.7 554.6V515.5M264.3 557.9V511.6M267.8 552.1V502.1M271.3 549.3V493.7M274.8 541.7V484.2M278.4 541.3V480.7M281.9 533.9V463.5M285.4 524.6V451.3M289 515.4V421.5M292.5 496.1V403.4M296 483.5V383.1M299.5 470.5V356.5M303.1 461.6V327.5M306.6 446.9V318.6M310.1 436.9V334.1M313.6 430V317.9M317.2 427.3V331.4M320.7 423.9V323.5M324.2 429.6V330.8M327.7 428.9V327M329.5 428.7V316.3M331.3 431V320.1M334.8 424.4V324M338.3 425.8V328.8M341.8 428V325.1M345.4 433.6V321M348.9 440.1V339M352.4 447.7V321.6M355.9 457.4V333.1M359.5 468.1V352.3M363 484.8V380.7M366.5 499V401.5M370 506.8V430.8M373.6 525.1V442.3M377.1 531.8V459.6M380.6 540V473.6M384.2 541.6V484.2M387.7 548.4V495.1M391.2 559.4V503.8M394.7 562.7V510.4M398.3 567V515.6M401.8 564.4V527.4M405.3 567.7V539.4M408.8 576.7V542.6M412.4 578V549.6M415.9 583V551.4M419.4 588.8V559.1M422.9 594.5V567.7M426.5 596.4V576.2M430 598.6V576.5M433.5 601.7V580.4M437 606.7V584.9M440.6 604.4V585.7M444.1 609.6V592.1M447.6 613.3V600.8M451.1 613.3V603.2M454.7 613.3V603.1M458.2 613.3V603.9M465.3 613.3V599.9" fill="none" stroke="#716c1e" stroke-width="2.700"/>
<path d="M63.7 611.1L64.2 619.1L64.6 618.1L65.1 610.9L65.5 616.4L65.9 626.3L66.4 619.5L66.8 619.6L67.3 624.1L67.7 617.1L68.1 620L68.6 617.1L69 624.7L69.5 620.7L69.9 626L70.3 619L70.8 617.8L71.2 623.1L71.7 624.7L72.1 623.1L72.5 625.1L73 630.5L73.4 615.4L73.9 607.5L74.3 606.8L74.7 624.7L75.2 615.9L75.6 620.8L76.1 618.2L76.5 623.5L77 619.3L77.4 614.9L77.8 623.5L78.3 621.2L78.7 614.6L79.2 621L79.6 624.9L80 627L80.5 617L80.9 625.2L81.4 619.2L81.8 625.6L82.2 621.4L82.7 625.6L83.1 620.9L83.6 623.1L84 617.8L84.4 612.4L84.9 621.1L85.3 624.1L85.8 618.6L86.2 621.6L86.6 614.6L87.1 628.4L87.5 619.1L88 616.7L88.4 620.8L88.9 625.5L89.3 617L89.7 622.4L90.2 619.2L90.6 619.2L91.1 617L91.5 617.4L91.9 616.8L92.4 618.9L92.8 616.7L93.3 618.9L93.7 615.1L94.1 619.8L94.6 616L95 616L95.5 624.5L95.9 627.9L96.3 612.2L96.8 618.3L97.2 620.4L97.7 623.2L98.1 620.6L98.5 623.2L99 623.8L99.4 623.8L99.9 625L100.3 623.8L100.8 624.1L101.2 623.6L101.6 614.6L102.1 622.7L102.5 619.8L103 623.2L103.4 620.3L103.8 618.9L104.3 624.1L104.7 609.8L105.2 622.1L105.6 609.8L106 616.6L106.5 616.7L106.9 617.9L107.4 616.7L107.8 629.8L108.2 627.2L108.7 622.1L109.1 617L109.6 622.7L110 625.6L110.4 620.1L110.9 613.1L111.3 619.6L111.8 616.1L112.2 623.5L112.7 610.4L113.1 612.5L113.5 619.6L114 620.1L114.4 619.6L114.9 613.8L115.3 620L115.7 620.5L116.2 619.2L116.6 620.6L117.1 623.2L117.5 622.5L117.9 621L118.4 622.8L118.8 618.7L119.3 615.9L119.7 612.4L120.1 620.9L120.6 628.6L121 620.8L121.5 622.5L121.9 620.9L122.3 617.7L122.8 619.4L123.2 617.7L123.7 628.1L124.1 620.7L124.6 613.1L125 620.7L125.4 620.9L125.9 627.2L126.3 618.6L126.8 615.6L127.2 618.8L127.6 626.1L128.1 618.7L128.5 620.6L129 614.9L129.4 622.1L129.8 622.7L130.3 616.5L130.7 626.8L131.2 623.5L131.6 613.8L132 623.5L132.5 614.7L132.9 620.7L133.4 620.2L133.8 613.1L134.2 626.2L134.7 621.5L135.1 622.4L135.6 608.6L136 613.9L136.5 624.9L136.9 616.5L137.3 624.9L137.8 619.5L138.2 617.7L138.7 622.9L139.1 610.2L139.5 620L140 622.8L140.4 609.7L140.9 622.8L141.3 626.1L141.7 614.7L142.2 620.5L142.6 613.1L143.1 619.4L143.5 623.7L143.9 622.6L144.4 623.7L144.8 621.4L145.3 622.5L145.7 617.2L146.1 621.9L146.6 619.4L147 623.8L147.5 631.8L147.9 617.3L148.4 618L148.8 618.8L149.2 619.1L149.7 617.4L150.1 614.6L150.6 623.5L151 621.6L151.4 614.7L151.9 613.2L152.3 623.5L152.8 615L153.2 623.5L153.6 619.4L154.1 625.6L154.5 622.6L155 615.1L155.4 610.1L155.8 621.2L156.3 614.2L156.7 621.2L157.2 614.4L157.6 622.3L158 618.1L158.5 616.5L158.9 621.6L159.4 620.1L159.8 612.8L160.3 620.1L160.7 627.7L161.1 627.1L161.6 612.7L162 615.6L162.5 627.1L162.9 626.5L163.3 617.6L163.8 617L164.2 618L164.7 618.6L165.1 609L165.5 618.6L166 614.6L166.4 626.5L166.9 619.4L167.3 612.5L167.7 622.4L168.2 619.4L168.6 618.9L169.1 617.4L169.5 610.2L169.9 623.5L170.4 618L170.8 613.5L171.3 627.1L171.7 617.3L172.2 623.6L172.6 617.3L173 617.4L173.5 617.9L173.9 623.7L174.4 613.5L174.8 616.8L175.2 621.5L175.7 617.3L176.1 616.6L176.6 609L177 628.5L177.4 615.3L177.9 613L178.3 619.7L178.8 616.7L179.2 617.7L179.6 614.1L180.1 616.8L180.5 619.3L181 624.3L181.4 607.4L181.8 627.5L182.3 625.2L182.7 627.5L183.2 614.3L183.6 629.4L184.1 620.8L184.5 618.3L184.9 608.6L185.4 613.5L185.8 625.7L186.3 612.2L186.7 613.6L187.1 617.7L187.6 626.4L188 619.1L188.5 610.3L188.9 627.9L189.3 619.7L189.8 617.3L190.2 619.7L190.7 613L191.1 620.2L191.5 610.5L192 609.2L192.4 616.1L192.9 620L193.3 626.5L193.7 614L194.2 620.5L194.6 614.1L195.1 622.4L195.5 614.1L196 617.8L196.4 621.7L196.8 622.3L197.3 611L197.7 616.8L198.2 617.4L198.6 624.7L199 613.9L199.5 619.7L199.9 616.5L200.4 618.6L200.8 609.2L201.2 620.6L201.7 626.6L202.1 608.9L202.6 609L203 623.3L203.4 623L203.9 614.7L204.3 609.6L204.8 606.8L205.2 616.3L205.6 613.1L206.1 601.3L206.5 614.3L207 631.4L207.4 608.9L207.9 604.1L208.3 626.4L208.7 621.6L209.2 608.8L209.6 600.9L210.1 618.6L210.5 612.2L210.9 629.2L211.4 605.5L212.3 617.1L213.1 604.1L214 628.5L214.9 598.9L215.8 620.1L216.7 598.3L217.5 611.8L218.4 603.1L219.3 620.8L220.2 599.8L221.1 622.3L222 596L222.8 627.9L223.7 595.9L224.6 624.9L225.5 592.1L226.4 618.2L227.2 588.6L228.1 620L229 590.1L229.9 622.8L230.8 582.1L231.7 625.8L232.5 591L233.4 614.8L234.3 586.7L235.2 619.2L236.1 581.4L236.9 616L237.8 577.4L238.7 612.3L239.6 582.9L240.5 610.1L241.4 576.7L242.2 622.1L243.1 574.6L244 617.5L244.9 573.7L245.8 623.8L246.6 568.6L247.5 615.9L248.4 574.7L249.3 625.1L250.2 562.2L251 626.4L251.9 562.2L252.8 626.2L253.7 566.2L254.6 622L255.5 554.2L256.3 618.3L257.2 563.2L258.1 618.8L259 559.8L259.9 615.7L260.7 544.8L261.6 621.5L262.5 550.6L263.4 621.5L264.3 548.1L265.2 623.6L266 549.9L266.9 622.1L267.8 542.3L268.7 634.5L269.6 541.1L270.4 628L271.3 539.5L272.2 626.7L273.1 542.7L274 626.7L274.8 531.9L275.7 623.9L276.6 533.1L277.5 628.1L278.4 531.5L279.3 622L280.1 524.5L281 627.5L281.9 524.1L282.8 610.1L283.7 522.4L284.5 621.3L285.4 514.8L286.3 606.1L287.2 512.9L288.1 603.1L289 505.6L289.8 590L290.7 494.7L291.6 596.6L292.5 486.3L293.4 586.7L294.2 486L295.1 572.2L296 473.7L296.9 563.9L297.8 471.6L298.6 568.5L299.5 460.7L300.4 549L301.3 456.1L302.2 552.7L303.1 451.8L303.9 564.2L304.8 440.9L305.7 544L306.6 437.1L307.5 552.3L308.3 429.2L309.2 548.9L310.1 427.1L311 536.8L311.9 423.9L312.8 544.4L313.6 420.2L314.5 539.9L315.4 417.7L316.3 537.1L317.2 417.5L318 536.4L318.9 419.6L319.8 531.7L320.7 414.2L321.6 533.4L322.4 416.1L323.3 534.4L324.2 419.8L325.1 531.6L326 414.9L326.9 540.4L327.7 419.1L328.6 529.9L329.5 418.9L330.4 528.2L331.3 421.2L332.1 535.3L333 422.1L333.9 519.6L334.8 414.6L335.7 539L336.6 419.9L337.4 527.2L338.3 416L339.2 537.5L340.1 413.7L341 546.7L341.8 418.2L342.7 539.3L343.6 423.5L344.5 541.6L345.4 423.8L346.2 536.1L347.1 421.6L348 544.5L348.9 430.3L349.8 552.2L350.7 437.9L351.5 546.8L352.4 437.9L353.3 550.5L354.2 445.9L355.1 558.1L355.9 447.6L356.8 557.2L357.7 450.9L358.6 575.5L359.5 458.4L360.4 571.8L361.2 471.3L362.1 584.8L363 475L363.9 572.4L364.8 485.5L365.6 591.8L366.5 489.2L367.4 595L368.3 495.5L369.2 598.9L370 497L370.9 601.5L371.8 506.8L372.7 615.1L373.6 515.3L374.5 605.8L375.3 521.6L376.2 619.8L377.1 522L378 623.5L378.9 530.7L379.7 626L380.6 530.2L381.5 624.4L382.4 528L383.3 630L384.2 531.8L385 628.6L385.9 534.7L386.8 627.9L387.7 538.6L388.6 626.9L389.4 539L390.3 617.4L391.2 549.6L392.1 617L393 547.7L393.8 621.8L394.7 552.9L395.6 620.6L396.5 557.9L397.4 619.3L398.3 557.2L399.1 626.5L400 556.5L400.9 629.1L401.8 554.6L402.7 620.6L403.5 559.3L404.4 618.4L405.3 557.9L406.2 617.1L407.1 558.9L408 624.6L408.8 567L409.7 619.5L410.6 566.5L411.5 615.4L412.4 568.2L413.2 625.9L414.1 573.1L415 620.3L415.9 573.2L416.8 619.4L417.6 573.1L418.5 608L419.4 579L420.3 616.5L421.2 587.7L422.1 628.3L422.9 584.7L423.8 615.7L424.7 585.7L425.6 624.3L426.5 586.6L427.3 618.3L428.2 588.8L429.1 628.7L430 588.8L430.9 619L431.8 590.2L432.6 614.8L433.5 591.9L434.4 622.4L435.3 597.8L436.2 617L437 596.9L437.9 621.5L438.8 593.5L439.7 612.6L440.6 594.6L441.5 619.7L442.3 598.6L443.2 610.2L444.1 599.8L445 619.9L445.9 603.4L446.3 616.2L446.7 619.5L447.2 617.7L447.6 606.2L448.1 611.9L448.5 626.5L448.9 621.3L449.4 607L449.8 624L450.3 615L450.7 609.9L451.1 605L451.6 621.8L452 614.9L452.5 620.3L452.9 607.7L453.4 621.4L453.8 630.5L454.2 620.5L454.7 604.1L455.1 618.6L455.6 623.7L456 614.7L456.4 613.3L456.9 613.2L457.3 619.1L457.8 630.3L458.2 608.2L458.6 612.4L459.1 618.8L459.5 608.5L460 606L460.4 613.8L460.8 626L461.3 621.4L461.7 612.8L462.2 619.7L462.6 625L463 624.1L463.5 611.5L463.9 621L464.4 622.2L464.8 614.2L465.3 614L465.7 628.2L466.1 611.5L466.6 626.3L467 609.9L467.5 619.7L467.9 619.6L468.3 616.4L468.8 611.1L469.2 618.3L469.7 621L470.1 622.7L470.5 617.8L471 615.5L471.4 620.9L471.9 619.7L472.3 611.5L472.7 615.4L473.2 620.9L473.6 624.1L474.1 616.7L474.5 616.3L474.9 619L475.4 619.5L475.8 616.4L476.3 616.8L476.7 614.5L477.2 619.2L477.6 612.7L478 615.3L478.5 620.2L478.9 615.2L479.4 619.4L479.8 623.3L480.2 618.7L480.7 623L481.1 615.8L481.6 614.4L482 625.6L482.4 611.4L482.9 618.5L483.3 615.7L483.8 624.4L484.2 621.8L484.6 624.4L485.1 611.3L485.5 615.7L486 620.2L486.4 610.4L486.8 619.1L487.3 618.9L487.7 615.4L488.2 618.9L488.6 617.3L489.1 622.8L489.5 617.9L489.9 616.7L490.4 615.6L490.8 613L491.3 604.6L491.7 607.1L492.1 615.7L492.6 617.3L493 625.5L493.5 615.2L493.9 616.3L494.3 624.5L494.8 623.9L495.2 614.8L495.7 615.5L496.1 622.5L496.5 613.5L497 616.3L497.4 615.6L497.9 616.4L498.3 621.4L498.7 616.4L499.2 625.5L499.6 625.6L500.1 613.2L500.5 618.5L501 614.6L501.4 620.6L501.8 622.4L502.3 618.2L502.7 618L503.2 620L503.6 612.9L504 620L504.5 613.6L504.9 619.1L505.4 615.5L505.8 618L506.2 620.2L506.7 627.2L507.1 617.9L507.6 606.7L508 623L508.4 623.5L508.9 613.2L509.3 620L509.8 615.5L510.2 623.2L510.6 621.9L511.1 616.2L511.5 624.7L512 623.9L512.4 619.7L512.9 616.4L513.3 619.9L513.7 615.8L514.2 615.2L514.6 615.7L515.1 621.4L515.5 615.4L515.9 622.6L516.4 615.4L516.8 609.9L517.3 623L517.7 610.3L518.1 623L518.6 623.4L519 620.8L519.5 628.1L519.9 620.8L520.3 615.1L520.8 621.4L521.2 629.2L521.7 609.3L522.1 614.4L522.5 620.8L523 610.1L523.4 617.1L523.9 620.5L524.3 621.8L524.8 614.6L525.2 618.9L525.6 616.3L526.1 620.6L526.5 612.3L527 620.6L527.4 617.6L527.8 623L528.3 624.9L528.7 622.8L529.2 627L529.6 622.6L530 628.9L530.5 622.3L530.9 616.7L531.4 617.8L531.8 613.1L532.2 612.9L532.7 624.7L533.1 620.9L533.6 624.3L534 599.9L534.4 615.8L534.9 620.1L535.3 610L535.8 620.1L536.2 615.3L536.7 619.3L537.1 621.3L537.5 619.3L538 616.4L538.4 626.9L538.9 617.8L539.3 626.9L539.7 613.4L540.2 624.8L540.6 612.9L541.1 621L541.5 617.8L541.9 622.9L542.4 619.2L542.8 622.9L543.3 616L543.7 619L544.1 617.1L544.6 618.3L545 617.5L545.5 622.7L545.9 619.8L546.3 615L546.8 624.6L547.2 614.9L547.7 624.6L548.1 614.9L548.6 624.9L549 620.6L549.4 622.9L549.9 620L550.3 614.3L550.8 625L551.2 617.4L551.6 621.1L552.1 621.5L552.5 620L553 618.9L553.4 620L553.8 627.8L554.3 634.5L554.7 616.7L555.2 614L555.6 626.4L556 623.7L556.5 622.6L556.9 623.7L557.4 620.6L557.8 622.1L558.2 618.7L558.7 617.3L559.1 613.9L559.6 629L560 623L560.5 615.1L560.9 621.5L561.3 624.9L561.8 610L562.2 619.4L562.7 616.4L563.1 626.2L563.5 611.9L564 621.8L564.4 627.6L564.9 624L565.3 617.5L565.7 616.4L566.2 619.3L566.6 623.1L567.1 608.8L567.5 619.6L567.9 617.6L568.4 621L568.8 616.1L569.3 620.3L569.7 611.2L570.1 623.4L570.6 619.3L571 608.1L571.5 621.5L571.9 620.4L572.4 621.4L572.8 620.4L573.2 622L573.7 622.5L574.1 628L574.6 618.2L575 617.7L575.4 622.7L575.9 618.6L576.3 611.8L576.8 615.3L577.2 623L577.6 632.4L578.1 617.9L578.5 621.2L579 630.4L579.4 620.9L579.8 618.8L580.3 614.5L580.7 628.4L581.2 624.3L581.6 619L582 615.9L582.5 623.3L582.9 618.6L583.4 617L583.8 626.4L584.3 624.2L584.7 621.6L585.1 618.7L585.6 619.5L586 616.2L586.5 623.6L586.9 612.5L587.3 623.1L587.8 617.8L588.2 613.7L588.7 610.6L589.1 608.5L589.5 629.6L590 627.7L590.4 613.7L590.9 620.1L591.3 619.4L591.7 611.8L592.2 613.2L592.6 623.6L593.1 621.1L593.5 622.1L594 621.1L594.4 625.7" fill="none" stroke="#ece21c" stroke-width="0.850" stroke-linejoin="bevel"/>
<path d="M257.2 576.3V563.5M313.6 433.3V343.4M444.1 612.9V599.9" fill="none" stroke="#d6cc24" stroke-width="0.900"/>
<text x="50.8" y="316.1" font-size="9.3" fill="#c0c0be" text-anchor="end" textLength="20.5" lengthAdjust="spacingAndGlyphs" xml:space="preserve">0.000</text>
<text x="50.8" y="343.8" font-size="9.3" fill="#c0c0be" text-anchor="end" textLength="24.3" lengthAdjust="spacingAndGlyphs" xml:space="preserve">-10.00</text>
<text x="50.8" y="376.4" font-size="9.3" fill="#c0c0be" text-anchor="end" textLength="24.3" lengthAdjust="spacingAndGlyphs" xml:space="preserve">-20.00</text>
<text x="50.8" y="409.1" font-size="9.3" fill="#c0c0be" text-anchor="end" textLength="24.3" lengthAdjust="spacingAndGlyphs" xml:space="preserve">-30.00</text>
<text x="50.8" y="441.7" font-size="9.3" fill="#c0c0be" text-anchor="end" textLength="24.3" lengthAdjust="spacingAndGlyphs" xml:space="preserve">-40.00</text>
<text x="50.8" y="474.4" font-size="9.3" fill="#c0c0be" text-anchor="end" textLength="24.3" lengthAdjust="spacingAndGlyphs" xml:space="preserve">-50.00</text>
<text x="50.8" y="507" font-size="9.3" fill="#c0c0be" text-anchor="end" textLength="24.3" lengthAdjust="spacingAndGlyphs" xml:space="preserve">-60.00</text>
<text x="50.8" y="539.6" font-size="9.3" fill="#c0c0be" text-anchor="end" textLength="24.3" lengthAdjust="spacingAndGlyphs" xml:space="preserve">-70.00</text>
<text x="50.8" y="572.3" font-size="9.3" fill="#c0c0be" text-anchor="end" textLength="24.3" lengthAdjust="spacingAndGlyphs" xml:space="preserve">-80.00</text>
<text x="50.8" y="604.9" font-size="9.3" fill="#c0c0be" text-anchor="end" textLength="24.3" lengthAdjust="spacingAndGlyphs" xml:space="preserve">-90.00</text>
<text x="50.8" y="632" font-size="9.3" fill="#c0c0be" text-anchor="end" textLength="24.3" lengthAdjust="spacingAndGlyphs" xml:space="preserve">-100.0</text>
<text x="64.1" y="304.4" font-size="9.1" fill="#e2da26" textLength="140" lengthAdjust="spacingAndGlyphs" xml:space="preserve">Tr  4   SA1 LogM 10.00dB/  -50.0dBm</text>
<path d="M58.2 467.6l5.600 3.600l-5.600 3.600z" fill="#f0ea10"/>
<path d="M600.3 467.6l-5.600 3.600l5.600 3.600z" fill="#f0ea10"/>
<text x="67.7" y="648.3" font-size="9.1" fill="#c0c0be" textLength="118.6" lengthAdjust="spacingAndGlyphs" xml:space="preserve">Ch3: SA  Center   100.000 MHz</text>
<path d="M190 644.5H202.6" stroke="#d8d020" stroke-width="1.3"/>
<text x="271.5" y="648.3" font-size="9.1" fill="#c0c0be" textLength="108.3" lengthAdjust="spacingAndGlyphs" xml:space="preserve">RBW  1.0 kHz/VBW  1.0 kHz</text>
<text x="518.4" y="648.3" font-size="9.1" fill="#c0c0be" textLength="75" lengthAdjust="spacingAndGlyphs" xml:space="preserve">Span  10.0000 MHz</text>
<rect x="11.2" y="638.3" width="14.500" height="10.600" fill="#b0b0b0"/>
<text x="16.2" y="647.2" font-size="9" fill="#2c2c2c" textLength="4.8" lengthAdjust="spacingAndGlyphs" xml:space="preserve">4</text>
</svg></div>
<div class="win" style="left:606px;top:292px;width:599px;height:360px;background:#000"><svg class="plot" width="599" height="360" viewBox="606 292 599 360">
<path d="M668 308H1198M668 340.6H1198M668 373.3H1198M668 405.9H1198M668 438.6H1198M668 471.2H1198M668 503.9H1198M668 536.5H1198M668 569.2H1198M668 601.9H1198M668 634.5H1198M668 308V634.5M721 308V634.5M774 308V634.5M827 308V634.5M880 308V634.5M933 308V634.5M986 308V634.5M1039 308V634.5M1092 308V634.5M1145 308V634.5M1198 308V634.5" fill="none" stroke="#464646" stroke-width="1" opacity="0.8"/>
<path d="M668 592L668.6 589.7L669.2 593.7L669.9 589.7L670.5 586.2L671.1 590L671.7 589.4L672.3 589.1L673 591L673.6 593L674.2 596.6L674.8 588.9L675.4 589.4L676.1 584.3L676.7 586.9L677.3 590.7L677.9 594.4L678.5 590.7L679.2 594.3L679.8 591.5L680.4 594.9L681 595.4L681.6 599.3L682.3 591L682.9 593.6L683.5 596.9L684.1 594.1L684.7 597.5L685.4 594.9L686 598.4L686.6 595.9L687.2 598.5L687.8 602.2L688.5 599.8L689.1 600.9L689.7 590.7L690.3 596.1L690.9 595.4L691.6 596.1L692.2 597.7L692.8 597.3L693.4 594.3L694 596.6L694.7 599.4L695.3 600.6L695.9 598.9L696.5 599.7L697.1 593.4L697.8 598.9L698.4 601.7L699 599.7L699.6 596.5L700.2 598.1L700.9 601L701.5 601.5L702.1 600.3L702.7 596.6L703.3 600.6L704 600.4L704.6 601.1L705.2 599.4L705.8 598.5L706.4 603.5L707.1 595.4L707.7 597.6L708.3 601.9L708.9 603.9L709.5 603L710.2 602L710.8 600.6L711.4 601.9L712 601.6L712.6 607L713.3 607.5L713.9 608.3L714.5 606.6L715.1 610M717.6 611L718.2 611.6L718.8 609.3L719.5 608.3L720.1 610.6L720.7 605.2L721.3 611L721.9 611.9L722.6 609.2L723.2 609.1L723.8 610.5L724.4 606.9L725 605.3L725.7 606.7L726.3 607.1L726.9 609.8L727.5 613.8L728.1 606.2L728.8 611.3L729.4 606.1L730 609.2L730.6 610.6L731.2 611.4L731.9 608.9L732.5 611.7L733.1 607.1L733.7 608.3L734.3 610.6L735 613L735.6 611.6L736.2 611.6L736.8 606.9L737.4 607.7L738.1 615.2L738.7 609.7L739.3 616.9L739.9 610.6L740.5 615.7L741.2 614.1L741.8 610.2L742.4 611.5L743 615.2L743.6 610.2L744.3 615.7L744.9 617.9L745.5 610.1L746.1 613.2L746.7 612.5L747.4 610L748 611.8L748.6 611.7L749.2 611.7L749.8 611.6L750.5 609L751.1 608.7L751.7 610.6L752.3 603.7L752.9 612.8L753.6 614.9L754.2 615.7L754.8 611.3L755.4 607.3L756 610.5L756.7 617.4L757.3 615.6L757.9 611.6L758.5 611.1L759.1 605.9L759.8 609.7L760.4 609L761 614.9L761.6 612.5L762.2 613.8L762.9 612.5L763.5 608.9L764.1 606.3L764.7 608.7L765.3 613L766 613.8L766.6 611.3L767.2 614.4L767.8 613.5L768.4 610M771 611L771.5 610.2L772.2 616.5L772.8 613.5L773.4 611.5L774 613.2L774.6 612.7L775.3 616.2L775.9 610.6L776.5 610.1L777.1 613.4L777.7 612.3L778.4 611.8L779 614.5L779.6 620.2L780.2 622.4L780.8 609.9L781.5 613.3L782.1 614.2L782.7 611.2L783.3 612.8L783.9 609.6L784.6 613.7L785.2 611.8L785.8 617.3L786.4 612.6L787 609.9L787.7 610.8L788.3 611.3L788.9 611.4L789.5 609.9L790.1 603.2L790.8 613.9L791.4 610.6L792 613.8L792.6 612.9L793.2 612.9L793.9 611.4L794.5 612.8L795.1 611.7L795.7 613.3L796.3 615.4L797 610.6L797.6 609.9L798.2 610.5L798.8 609.4L799.4 614.3L800.1 611.1L800.7 614.3L801.3 612.5L801.9 612.5L802.5 611.9L803.2 610.3L803.8 611.7L804.4 614.8L805 610.9L805.6 608.4L806.3 609.5L806.9 609.1L807.5 616L808.1 614L808.7 612.7L809.4 617.7L810 614.1L810.6 612.3L811.2 616.4L811.8 616.1L812.5 613L813.1 610.8L813.7 610L814.3 614.6L814.9 616.3L815.6 614.8L816.2 613.1L816.8 614L817.4 613.5L818 610.8L818.7 610L819.3 611.4L819.9 615.3L820.5 614.9L821.1 610M824.3 611L824.9 621.3L825.5 618.2L826.1 618.2L826.7 610.6L827.3 609.9L828 613.7L828.6 612.9L829.2 611.3L829.8 607.5L830.4 608.7L831.1 607.7L831.7 609.7L832.3 608.6L832.9 607.4L833.5 608.6L834.2 611.5L834.8 609.6L835.4 612.4L836 609.1L836.6 605.9L837.3 614.5L837.9 608.2L838.5 611.7L839.1 612.5L839.7 615.1L840.4 615.3L841 614L841.6 615.4L842.2 610.3L842.8 607.3L843.5 616.5L844.1 610.8L844.7 609.5L845.3 617.9L845.9 616.3L846.6 610.4L847.2 613.5L847.8 614L848.4 613.4L849 618.6L849.7 617L850.3 611.4L850.9 607.9L851.5 611.3L852.1 612.8L852.8 611.1L853.4 605.6L854 611L854.6 614.3L855.2 613.3L855.9 611.1L856.5 610.4L857.1 615.9L857.7 611.8L858.3 611.4L859 611.9L859.6 616.9L860.2 614.1L860.8 616.6L861.4 620.6L862.1 614.7L862.7 612.4L863.3 612.3L863.9 611.9L864.5 612.3L865.2 609.6L865.8 609.3L866.4 607.4L867 604.2L867.6 607.9L868.3 609.6L868.9 606.7L869.5 612.8L870.1 614.1L870.7 612.1L871.4 616.2L872 611.4L872.6 607.3L873.2 614.2L873.8 615.8L874.5 610.9L875.1 608L875.7 609.4L876.8 597.3L877.3 594.7L877.8 597.9L878.9 610.3L879.4 612.8L880 612.3L880.7 613.2L881.3 613.2L881.9 613.1L882.5 611.4L883.1 603.7L883.8 609.1L884.4 614L885 615.5L885.6 615.1L886.2 609.5L886.9 610L887.5 614.1L888.1 616.4L888.7 616.4L889.3 613.5L890 615.5L890.6 613.7L891.2 609.1L891.8 612L892.4 610.6L893.1 615.7L893.7 613.2L894.3 611.5L894.9 614.7L895.5 609.9L896.2 611.3L896.8 614.4L897.4 614.1L898 610.4L898.6 615.3L899.3 613.6L899.9 615L900.5 613L901.1 613.8L901.7 607.4L902.4 610.7L903 611.7L903.6 611.1L904.2 610.2L904.8 610.8L905.5 611.6L906.1 612.2L906.7 610.9L907.3 608.8L907.9 606.6L908.6 606.2L909.2 613.4L909.8 612.7L910.4 611L911 608.9L911.7 608.6L912.3 615.2L912.9 613.2L913.5 616.7L914.1 615.4L914.8 615.4L915.4 615L916 609L916.6 612.4L917.2 614.3L917.9 612.6L918.5 609.6L919.1 615.9L919.7 609.9L920.3 612.9L921 615.8L921.6 613.1L922.2 610.6L922.8 604.7L923.4 607.4L924.1 613.1L924.7 613.6L925.3 615.1L925.9 611.7L926.5 609.6L927.2 612.5L927.8 609.8L928.4 615.7L929 615.3L929.4 609.4L930.5 596L931 593.4L931.5 596.6L932.6 610.3L933.4 609.4L934 607L934.6 607.7L935.2 617.1L935.8 615.4L936.5 613.6L937.1 614.5L937.7 615.1L938.3 614.6L938.9 611.4L939.6 613L940.2 616.3L940.8 617.8L941.4 613.5L942 616.7L942.7 612.2L943.3 612.9L943.9 614.1L944.5 612.2L945.1 613L945.8 610.8L946.4 614.9L947 618.3L947.6 608.9L948.2 609.9L948.9 618.8L949.5 610.3L950.1 614.3L950.7 608.2L951.3 605.4L952 608.1L952.6 605.5L953.2 614.5L953.8 610.5L954.4 612.3L955.1 609.7L955.7 611.8L956.3 616.6L956.9 615.5L957.5 612.7L958.2 613.4L958.8 612.3L959.4 614.4L960 608.8L960.6 611.9L961.3 611.3L961.9 616L962.5 611.6L963.1 607.2L963.7 609L964.4 612.1L965 614.7L965.6 611.4L966.2 609.9L966.8 614.9L967.5 613.3L968.1 610.6L968.7 613.5L969.3 611.2L969.9 612.1L970.6 608.4L971.2 613.9L971.8 611.9L972.4 611.1L973 616.8L973.7 616.3L974.3 615.1L974.9 610.4L975.5 612L976.1 612.3L976.8 611.6L977.4 605L978 610L978.6 607.1L979.2 610.5L979.9 616.2L980.5 615.6L981.1 616L981.7 614.1L982.3 616.1L983 615.7L983.6 607.8L984.2 609.4L984.8 610.8L985.4 606.8L986.1 614.4L986.7 612L987.3 612.6L987.9 612.4L988.5 613.7L989.2 612.2L989.8 608.5L990.4 607.5L991 610L991.6 609.5L992.3 608.3L992.9 620.7L993.5 612L994.1 605.5L994.7 608.6L995.4 613L996 612.3L996.6 608.6L997.2 613.7L997.8 612.8L998.5 610.1L999.1 613.9L999.7 607.3L1000.3 607.6L1000.9 606.6L1001.6 613L1002.2 612.3L1002.8 607.5L1003.4 609.1L1004 608L1004.7 615.4L1005.3 613.8L1005.9 617.1L1006.5 615L1007.1 611.5L1007.8 611.7L1008.4 615.1L1009 612.2L1009.6 609.7L1010.2 611.3L1010.9 609.7L1011.5 607.9L1012.1 607.3L1012.7 605.5L1013.3 610.7L1014 612.8L1014.6 612.5L1015.2 609L1015.8 610.9L1016.4 613L1017.1 613.7L1017.7 610.9L1018.3 606.9L1018.9 607.6L1019.5 611.3L1020.2 609.8L1020.8 608.4L1021.4 606.9L1022 612L1022.6 610.6L1023.3 612L1023.9 613.4L1024.5 608.9L1025.1 608.9L1025.7 610.9L1026.4 608L1027 609.8L1027.6 613.7L1028.2 610.1L1028.8 613.1L1029.5 614.7L1030.1 613.5L1030.7 612.4L1031.3 609.4L1031.9 611.6L1032.6 616.6L1033.2 614.8L1033.8 611.3L1034.4 611.5L1035 612L1035.7 614.8L1036.3 613.7L1036.9 610.4L1037.5 609.4L1038.1 613.1L1038.8 614.2L1039.4 614.7L1040 610L1040.6 612.5L1041.2 612.9L1041.9 613.9L1042.5 614.6L1043.1 612.7L1043.7 609.2L1044.3 612.1L1045 608.9L1045.6 610.4L1046.2 609.6L1046.8 604.2L1047.4 603.1L1048.1 608.4L1048.7 610.9L1049.3 611.7L1049.9 609.7L1050.5 615.6L1051.2 615.1L1051.8 612.4L1052.4 613.5L1053 614.7L1053.6 609L1054.3 613.9L1054.9 613.9L1055.5 613.3L1056.1 613.1L1056.7 614.5L1057.4 610.4L1058 610.9L1058.6 606.9L1059.2 613.2L1059.8 612.3L1060.5 614.5L1061.1 612L1061.7 608L1062.3 613.1L1062.9 609.8L1063.6 612.5L1064.2 615.1L1064.8 611.5L1065.4 609L1066 610.2L1066.7 610.3L1067.3 611L1067.9 612.6L1068.5 617.4L1069.1 614.3L1069.8 613.4L1070.4 610.5L1071 612.9L1071.6 606.8L1072.2 607.6L1072.9 611.7L1073.5 609.9L1074.1 611.2L1074.7 608.1L1075.3 611L1076 607.8L1076.6 612.6L1077.2 611.9L1077.8 605.3L1078.4 613.6L1079.1 612.9L1079.7 611.4L1080.3 614.2L1080.9 614.5L1081.5 610.7L1082.2 612.6L1082.8 607.7L1083.4 605.4L1084 610.8L1084.6 610.6L1085.3 609.4L1085.9 608.7L1086.5 611.8L1087.1 609.7L1087.7 611.7L1088.4 611.8L1089 607.9L1089.6 610.1L1090.2 613.7L1090.8 613.5L1091.5 610.8L1092.1 612.7L1092.7 614.3L1093.3 611.6L1093.9 613.4L1094.6 606.5L1095.2 610.7L1095.8 609.9L1096.4 614.2L1097 613.3L1097.7 609.2L1098.3 608.8L1098.9 608.8L1099.5 611.9L1100.1 611L1100.8 611.3L1101.4 614.8L1102 609.3L1102.6 611.6L1103.2 612.2L1103.9 608.9L1104.5 608.3L1105.1 603.5L1105.7 608.5L1106.3 607.2L1107 609.7L1107.6 610.9L1108.2 608L1108.8 608L1109.4 611.5L1110.1 611.5L1110.7 610.4L1111.3 606.2L1111.9 611.1L1112.5 610.9L1113.2 608.9L1113.8 609.8L1114.4 611.9L1115 609L1115.6 612.3L1116.3 606.5L1116.9 615.6L1117.5 618.3L1118.1 612.1L1118.7 608.8L1119.4 608.8L1120 611.7L1120.6 611.6L1121.2 610.7L1121.8 612.9L1122.5 612.4L1123.1 613.4L1123.7 608.4L1124.3 608.3L1124.9 611.2L1125.6 611.9L1126.2 612.1L1126.8 611.8L1127.4 610.1L1128 611.1L1128.7 612.1L1129.3 610L1129.9 610.5L1130.5 610.6L1131.1 610.2L1131.8 610.8L1132.4 607.6L1133 612.1L1133.6 607.5L1134.2 611.4L1134.9 613.3L1135.5 612.3L1136.1 611.8L1136.7 607.1L1137.3 609.8L1138 607.6L1138.6 607.1L1139.2 607.6L1139.8 607.9L1140.4 602.8L1141.1 608.5L1141.7 606.6L1142.3 614.4L1142.9 611.3L1143.5 606.8L1144.2 610.8L1144.8 611L1145.4 608L1146 613.9L1146.6 611.1L1147.3 612.7L1147.9 610.6L1148.5 609L1149.1 609.2L1149.7 612.6L1150.4 611.1L1151 611.8L1151.6 609.9L1152.2 610.8L1152.8 612.7L1153.5 608.5L1154.1 612.3L1154.7 612.6L1155.3 607.7L1155.9 608L1156.6 607.4L1157.2 611.8L1157.8 610.5L1158.4 612.1L1159 615.5L1159.7 610.2L1160.3 612.1L1160.9 610.7L1161.5 612.4L1162.1 609.5L1162.8 607.9L1163.4 612L1164 613.6L1164.6 617.9L1165.2 613.8L1165.9 611L1166.5 612.1L1167.1 608.8L1167.7 609.4L1168.3 610L1169 611.5L1169.6 614.4L1170.2 611.2L1170.8 607.6L1171.4 605.8L1172.1 608.2L1172.7 612.9L1173.3 611.9L1173.9 609.7L1174.5 612.5L1175.2 611.8L1175.8 611.8L1176.4 612.5L1177 613.2L1177.6 609.9L1178.3 608L1178.9 606L1179.5 609.2L1180.1 609.8L1180.7 614.2L1181.4 610.6L1182 605.8L1182.6 610.4L1183.2 609.1L1183.8 610.5L1184.5 608.8L1185.1 607.2L1185.7 612.7L1186.3 613.4L1186.9 612.4L1187.6 610.8L1188.2 606.3L1188.8 608.2L1189.4 609.1L1190 608.9L1190.7 611L1191.3 607.3L1191.9 607.1L1192.5 606.9L1193.1 602.1L1193.8 612.8L1194.4 609.4L1195 610.6L1195.6 612.4L1196.2 603.3L1196.9 604.4L1197.5 609.6" fill="none" stroke="#ece21c" stroke-width="0.900" stroke-linejoin="bevel"/>
<path d="M715.1 610L715.4 344.4L716.3 318.3L717.2 344.4L717.6 611" fill="none" stroke="#ece21c" stroke-width="0.900" stroke-linejoin="bevel"/>
<path d="M768.4 610L768.7 499.1L769.7 473L770.6 499.1L771 611" fill="none" stroke="#b4ac22" stroke-width="0.900" stroke-linejoin="bevel"/>
<path d="M821.1 610L821.5 503.6L822.7 477.5L824 503.6L824.3 611" fill="none" stroke="#b4ac22" stroke-width="0.900" stroke-linejoin="bevel"/>
<text x="655.3" y="316.1" font-size="9.3" fill="#c0c0be" text-anchor="end" textLength="20.5" lengthAdjust="spacingAndGlyphs" xml:space="preserve">0.000</text>
<text x="655.3" y="343.8" font-size="9.3" fill="#c0c0be" text-anchor="end" textLength="24.3" lengthAdjust="spacingAndGlyphs" xml:space="preserve">-10.00</text>
<text x="655.3" y="376.4" font-size="9.3" fill="#c0c0be" text-anchor="end" textLength="24.3" lengthAdjust="spacingAndGlyphs" xml:space="preserve">-20.00</text>
<text x="655.3" y="409.1" font-size="9.3" fill="#c0c0be" text-anchor="end" textLength="24.3" lengthAdjust="spacingAndGlyphs" xml:space="preserve">-30.00</text>
<text x="655.3" y="441.7" font-size="9.3" fill="#c0c0be" text-anchor="end" textLength="24.3" lengthAdjust="spacingAndGlyphs" xml:space="preserve">-40.00</text>
<text x="655.3" y="474.4" font-size="9.3" fill="#c0c0be" text-anchor="end" textLength="24.3" lengthAdjust="spacingAndGlyphs" xml:space="preserve">-50.00</text>
<text x="655.3" y="507" font-size="9.3" fill="#c0c0be" text-anchor="end" textLength="24.3" lengthAdjust="spacingAndGlyphs" xml:space="preserve">-60.00</text>
<text x="655.3" y="539.6" font-size="9.3" fill="#c0c0be" text-anchor="end" textLength="24.3" lengthAdjust="spacingAndGlyphs" xml:space="preserve">-70.00</text>
<text x="655.3" y="572.3" font-size="9.3" fill="#c0c0be" text-anchor="end" textLength="24.3" lengthAdjust="spacingAndGlyphs" xml:space="preserve">-80.00</text>
<text x="655.3" y="604.9" font-size="9.3" fill="#c0c0be" text-anchor="end" textLength="24.3" lengthAdjust="spacingAndGlyphs" xml:space="preserve">-90.00</text>
<text x="655.3" y="632" font-size="9.3" fill="#c0c0be" text-anchor="end" textLength="24.3" lengthAdjust="spacingAndGlyphs" xml:space="preserve">-100.0</text>
<text x="667.8" y="304.4" font-size="9.1" fill="#e2da26" textLength="137.8" lengthAdjust="spacingAndGlyphs" xml:space="preserve">Tr  3   SA1 LogM 10.00dB/  0.00dBm</text>
<path d="M662 304.3l6.500 3.600l-6.500 3.600z" fill="#f0ea10"/>
<path d="M1204.700 304.300l-6.500 3.600l6.500 3.600z" fill="#f0ea10"/>
<path d="M710.300 308.600h12l-6 9.300z" fill="#f0ea10"/>
<text x="716.3" y="306.5" font-size="9" fill="#c8c020" text-anchor="middle" textLength="4.5" lengthAdjust="spacingAndGlyphs" xml:space="preserve">1</text>
<path d="M764.200 463.700h10.800l-5.400 9.200z" fill="none" stroke="#bcb424" stroke-width="1"/>
<text x="769.8" y="462.2" font-size="9" fill="#d8d028" text-anchor="middle" textLength="4.6" lengthAdjust="spacingAndGlyphs" xml:space="preserve">2</text>
<path d="M817.500 468.700h10.600l-5.300 8z" fill="none" stroke="#bcb424" stroke-width="1"/>
<text x="822.9" y="467" font-size="9" fill="#d8d028" text-anchor="middle" textLength="4.6" lengthAdjust="spacingAndGlyphs" xml:space="preserve">3</text>
<text x="992.2" y="316.7" font-size="9.1" fill="#e2da26" textLength="13.7" lengthAdjust="spacingAndGlyphs" xml:space="preserve">&gt; 1:</text>
<text x="1019" y="316.7" font-size="9.1" fill="#e2da26" textLength="82.9" lengthAdjust="spacingAndGlyphs" xml:space="preserve">100.231 090 000 MHz</text>
<text x="1138.4" y="316.7" font-size="9.1" fill="#e2da26" textLength="58.2" lengthAdjust="spacingAndGlyphs" xml:space="preserve">-3.156212 dBm</text>
<text x="999.7" y="327.5" font-size="9.1" fill="#e2da26" textLength="6.2" lengthAdjust="spacingAndGlyphs" xml:space="preserve">2:</text>
<text x="1019" y="327.5" font-size="9.1" fill="#e2da26" textLength="82.9" lengthAdjust="spacingAndGlyphs" xml:space="preserve">199.967 170 000 MHz</text>
<text x="1133.8" y="327.5" font-size="9.1" fill="#e2da26" textLength="62.8" lengthAdjust="spacingAndGlyphs" xml:space="preserve">-50.540562 dBm</text>
<text x="999.7" y="338.3" font-size="9.1" fill="#e2da26" textLength="6.2" lengthAdjust="spacingAndGlyphs" xml:space="preserve">3:</text>
<text x="1018.5" y="338.3" font-size="9.1" fill="#e2da26" textLength="83.4" lengthAdjust="spacingAndGlyphs" xml:space="preserve">298.977 250 000 MHz</text>
<text x="1133.8" y="338.3" font-size="9.1" fill="#e2da26" textLength="62.8" lengthAdjust="spacingAndGlyphs" xml:space="preserve">-51.922487 dBm</text>
<text x="671.8" y="648.3" font-size="9.1" fill="#c0c0be" textLength="111.9" lengthAdjust="spacingAndGlyphs" xml:space="preserve">Ch2: SA  Start   10.0000 MHz</text>
<path d="M787.400 644.500H799.800" stroke="#d8d020" stroke-width="1.300"/>
<text x="876" y="648.3" font-size="9.1" fill="#c0c0be" textLength="108.2" lengthAdjust="spacingAndGlyphs" xml:space="preserve">RBW  1.0 kHz/VBW  1.0 kHz</text>
<text x="1197.5" y="648.3" font-size="9.1" fill="#c0c0be" text-anchor="end" textLength="75" lengthAdjust="spacingAndGlyphs" xml:space="preserve">Stop  1.00000 GHz</text>
<rect x="615.400" y="638.300" width="14.600" height="10.600" fill="#b0b0b0"/>
<text x="620.4" y="647.2" font-size="9" fill="#2c2c2c" textLength="4.8" lengthAdjust="spacingAndGlyphs" xml:space="preserve">2</text>
</svg></div>
<svg id="ov" width="1280" height="654" viewBox="0 0 1280 654">
<text x="3" y="9.5" font-size="8.6" fill="#1c1c1c" textLength="12" lengthAdjust="spacingAndGlyphs" xml:space="preserve">File</text>
<text x="23" y="9.5" font-size="8.6" fill="#1c1c1c" textLength="37" lengthAdjust="spacingAndGlyphs" xml:space="preserve">Instrument</text>
<text x="68" y="9.5" font-size="8.6" fill="#1c1c1c" textLength="33.2" lengthAdjust="spacingAndGlyphs" xml:space="preserve">Response</text>
<text x="109.2" y="9.5" font-size="8.6" fill="#1c1c1c" textLength="29.6" lengthAdjust="spacingAndGlyphs" xml:space="preserve">Stimulus</text>
<text x="146.8" y="9.5" font-size="8.6" fill="#1c1c1c" textLength="20.2" lengthAdjust="spacingAndGlyphs" xml:space="preserve">Utility</text>
<text x="175" y="9.5" font-size="8.6" fill="#1c1c1c" textLength="16.8" lengthAdjust="spacingAndGlyphs" xml:space="preserve">Help</text>
<text x="1029.2" y="29.1" font-size="10.2" fill="#ffffff" textLength="62.1" lengthAdjust="spacingAndGlyphs" xml:space="preserve">Peak Threshold</text>
<text x="1106.6" y="28.8" font-size="9.8" fill="#202020" textLength="29.9" lengthAdjust="spacingAndGlyphs" xml:space="preserve">-100 dB</text>
<text x="1216.4" y="29.3" font-size="9.6" fill="#ffffff" textLength="34.8" lengthAdjust="spacingAndGlyphs" xml:space="preserve">Hardkeys</text>
<text x="1245.3" y="48.2" font-size="8.2" fill="#ffffff" text-anchor="middle" textLength="35.7" lengthAdjust="spacingAndGlyphs" xml:space="preserve">Instrument</text>
<text x="1228.7" y="73.7" font-size="8.2" fill="#202020" text-anchor="middle" textLength="14.5" lengthAdjust="spacingAndGlyphs" xml:space="preserve">Prev</text>
<text x="1262" y="73.7" font-size="8.2" fill="#202020" text-anchor="middle" textLength="14.2" lengthAdjust="spacingAndGlyphs" xml:space="preserve">Next</text>
<text x="1228.7" y="120.2" font-size="8.2" fill="#202020" text-anchor="middle" textLength="17.8" lengthAdjust="spacingAndGlyphs" xml:space="preserve">Trace</text>
<text x="1262" y="120.2" font-size="8.2" fill="#202020" text-anchor="middle" textLength="26.2" lengthAdjust="spacingAndGlyphs" xml:space="preserve">Channel</text>
<text x="1228.7" y="166.6" font-size="8.2" fill="#202020" text-anchor="middle" textLength="23.2" lengthAdjust="spacingAndGlyphs" xml:space="preserve">Display</text>
<text x="1262" y="166.6" font-size="8.2" fill="#202020" text-anchor="middle" textLength="18.4" lengthAdjust="spacingAndGlyphs" xml:space="preserve">Setup</text>
<text x="1245.3" y="194.3" font-size="8.2" fill="#ffffff" text-anchor="middle" textLength="30.6" lengthAdjust="spacingAndGlyphs" xml:space="preserve">Response</text>
<text x="1228.7" y="220" font-size="8.2" fill="#202020" text-anchor="middle" textLength="16.9" lengthAdjust="spacingAndGlyphs" xml:space="preserve">Meas</text>
<text x="1262" y="220" font-size="8.2" fill="#202020" text-anchor="middle" textLength="22.7" lengthAdjust="spacingAndGlyphs" xml:space="preserve">Format</text>
<text x="1228.7" y="266.4" font-size="8.2" fill="#202020" text-anchor="middle" textLength="17.6" lengthAdjust="spacingAndGlyphs" xml:space="preserve">Scale</text>
<text x="1262" y="266.4" font-size="8.2" fill="#202020" text-anchor="middle" textLength="16.6" lengthAdjust="spacingAndGlyphs" xml:space="preserve">Math</text>
<text x="1228.7" y="312.9" font-size="8.2" fill="#202020" text-anchor="middle" textLength="25.2" lengthAdjust="spacingAndGlyphs" xml:space="preserve">Avg BW</text>
<text x="1262" y="312.9" font-size="8.2" fill="#202020" text-anchor="middle" textLength="10.2" lengthAdjust="spacingAndGlyphs" xml:space="preserve">Cal</text>
<text x="1228.7" y="359.3" font-size="8.2" fill="#202020" text-anchor="middle" textLength="22" lengthAdjust="spacingAndGlyphs" xml:space="preserve">Marker</text>
<text x="1262" y="359.3" font-size="8.2" fill="#202020" text-anchor="middle" textLength="22" lengthAdjust="spacingAndGlyphs" xml:space="preserve">Search</text>
<text x="1245.3" y="386.6" font-size="8.2" fill="#ffffff" text-anchor="middle" textLength="27.9" lengthAdjust="spacingAndGlyphs" xml:space="preserve">Stimulus</text>
<text x="1228.7" y="412.6" font-size="8.2" fill="#202020" text-anchor="middle" textLength="14.9" lengthAdjust="spacingAndGlyphs" xml:space="preserve">Freq</text>
<text x="1262" y="412.6" font-size="8.2" fill="#202020" text-anchor="middle" textLength="20" lengthAdjust="spacingAndGlyphs" xml:space="preserve">Power</text>
<text x="1228.7" y="459" font-size="8.2" fill="#202020" text-anchor="middle" textLength="21.5" lengthAdjust="spacingAndGlyphs" xml:space="preserve">Sweep</text>
<text x="1262" y="459" font-size="8.2" fill="#202020" text-anchor="middle" textLength="22.7" lengthAdjust="spacingAndGlyphs" xml:space="preserve">Trigger</text>
<text x="1245.3" y="486.9" font-size="8.2" fill="#ffffff" text-anchor="middle" textLength="18.1" lengthAdjust="spacingAndGlyphs" xml:space="preserve">Utility</text>
<text x="1228.7" y="507.8" font-size="8.2" fill="#202020" text-anchor="middle" textLength="16.5" lengthAdjust="spacingAndGlyphs" xml:space="preserve">Save</text>
<text x="1228.7" y="516.8" font-size="8.2" fill="#202020" text-anchor="middle" textLength="20.1" lengthAdjust="spacingAndGlyphs" xml:space="preserve">Recall</text>
<text x="1262" y="512.6" font-size="8.2" fill="#202020" text-anchor="middle" textLength="20.1" lengthAdjust="spacingAndGlyphs" xml:space="preserve">Macro</text>
<text x="1228.7" y="559.1" font-size="8.2" fill="#202020" text-anchor="middle" textLength="24.2" lengthAdjust="spacingAndGlyphs" xml:space="preserve">System</text>
<text x="1262" y="559.1" font-size="8.2" fill="#202020" text-anchor="middle" textLength="17.3" lengthAdjust="spacingAndGlyphs" xml:space="preserve">Undo</text>
<text x="1228.7" y="605.5" font-size="8.2" fill="#202020" text-anchor="middle" textLength="14.3" lengthAdjust="spacingAndGlyphs" xml:space="preserve">Help</text>
<text x="1262" y="605.5" font-size="8.2" fill="#202020" text-anchor="middle" textLength="21.2" lengthAdjust="spacingAndGlyphs" xml:space="preserve">Preset</text>
</svg>
</body></html>
